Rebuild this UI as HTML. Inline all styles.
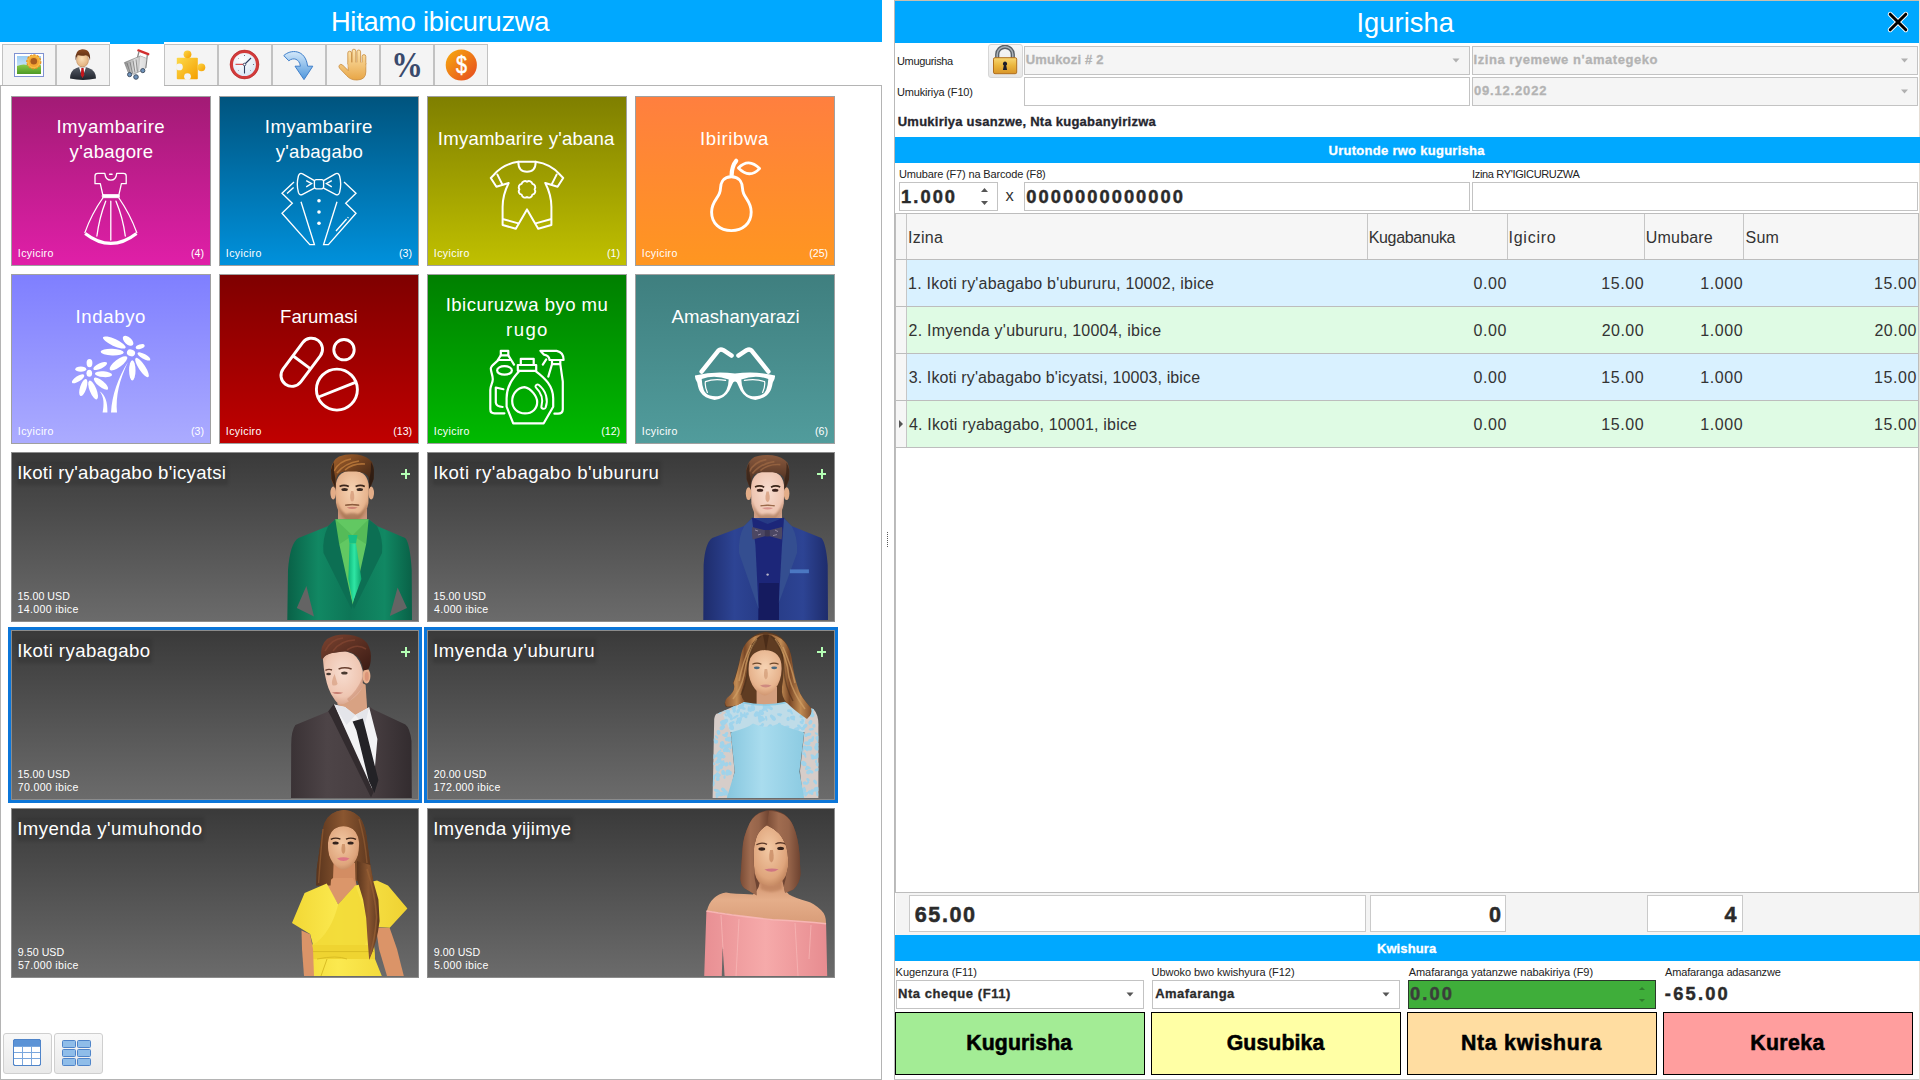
<!DOCTYPE html>
<html><head><meta charset="utf-8"><title>Igurisha</title><style>
html,body{margin:0;padding:0;background:#fff;}
body{width:1920px;height:1080px;position:relative;overflow:hidden;font-family:"Liberation Sans",sans-serif;}
div,span.t,svg{position:absolute;box-sizing:border-box;}
span.t{white-space:pre;display:block;}
</style></head><body>
<div style="left:0px;top:0px;width:882px;height:42px;background:#00a8ff;"></div>
<span class="t" style="left:330.92px;top:8px;font-size:27.3px;line-height:27.3px;color:#fff;letter-spacing:-0.279px;">Hitamo ibicuruzwa</span>
<div style="left:2px;top:44px;width:54px;height:42px;background:#f4f4f4;border:1px solid #c2c2c2;"></div>
<div style="left:56px;top:44px;width:54px;height:42px;background:#f4f4f4;border:1px solid #c2c2c2;"></div>
<div style="left:110px;top:42px;width:54px;height:44px;background:#fff;border-top:2px solid #00a8ff;"></div>
<div style="left:164px;top:44px;width:54px;height:42px;background:#f4f4f4;border:1px solid #c2c2c2;"></div>
<div style="left:218px;top:44px;width:54px;height:42px;background:#f4f4f4;border:1px solid #c2c2c2;"></div>
<div style="left:272px;top:44px;width:54px;height:42px;background:#f4f4f4;border:1px solid #c2c2c2;"></div>
<div style="left:326px;top:44px;width:54px;height:42px;background:#f4f4f4;border:1px solid #c2c2c2;"></div>
<div style="left:380px;top:44px;width:54px;height:42px;background:#f4f4f4;border:1px solid #c2c2c2;"></div>
<div style="left:434px;top:44px;width:54px;height:42px;background:#f4f4f4;border:1px solid #c2c2c2;"></div>
<svg style="left:0;top:40px" width="492" height="48" viewBox="0 40 492 48">
<defs>
<linearGradient id="tSky" x1="0" y1="0" x2="0" y2="1"><stop offset="0" stop-color="#9ccdf3"/><stop offset="1" stop-color="#e4f2fb"/></linearGradient>
<linearGradient id="tGrass" x1="0" y1="0" x2="0" y2="1"><stop offset="0" stop-color="#8ccb4a"/><stop offset="1" stop-color="#4d9a26"/></linearGradient>
<linearGradient id="tSuit" x1="0" y1="0" x2="0" y2="1"><stop offset="0" stop-color="#5a606c"/><stop offset="1" stop-color="#1f232b"/></linearGradient>
<radialGradient id="tFace" cx="0.45" cy="0.4" r="0.7"><stop offset="0" stop-color="#fbe0b8"/><stop offset="1" stop-color="#dca672"/></radialGradient>
<linearGradient id="tHair" x1="0" y1="0" x2="0" y2="1"><stop offset="0" stop-color="#8a4a22"/><stop offset="1" stop-color="#4e2610"/></linearGradient>
<linearGradient id="tCart" x1="0" y1="0" x2="1" y2="0"><stop offset="0" stop-color="#8d8d8d"/><stop offset="0.5" stop-color="#e2e2e2"/><stop offset="1" stop-color="#8a8a8a"/></linearGradient>
<linearGradient id="tPuz" x1="0" y1="0" x2="1" y2="1"><stop offset="0" stop-color="#fcd949"/><stop offset="1" stop-color="#f59f00"/></linearGradient>
<radialGradient id="tClk" cx="0.4" cy="0.35" r="0.8"><stop offset="0" stop-color="#ffffff"/><stop offset="1" stop-color="#cfe0f2"/></radialGradient>
<linearGradient id="tArr" x1="0" y1="0" x2="0" y2="1"><stop offset="0" stop-color="#d3e8fa"/><stop offset="1" stop-color="#4f97dc"/></linearGradient>
<linearGradient id="tHand" gradientUnits="userSpaceOnUse" x1="0" y1="49" x2="0" y2="80"><stop offset="0" stop-color="#fde6b2"/><stop offset="1" stop-color="#e8a646"/></linearGradient>
<linearGradient id="tCoin" x1="0" y1="0" x2="1" y2="1"><stop offset="0" stop-color="#f7ad10"/><stop offset="1" stop-color="#e6481f"/></linearGradient>
</defs>
<!-- 1 picture -->
<rect x="14.5" y="53.5" width="29" height="23" fill="#fff" stroke="#7f92d2"/>
<rect x="17" y="56" width="24" height="18" fill="url(#tSky)"/>
<path d="M17 66 Q24 63 30 66 T41 65 V74 H17Z" fill="url(#tGrass)"/>
<circle cx="33.8" cy="61.8" r="7" fill="#f7bd45" stroke="#e58e22" stroke-width="1.2" stroke-dasharray="2.2 1.4"/>
<circle cx="33.8" cy="61.8" r="5.2" fill="#f4a733"/>
<circle cx="33.8" cy="61.3" r="3.3" fill="#a95c1e"/>
<!-- 2 user -->
<path d="M70 78.6 Q70 70.5 76.5 68 L82.5 66 L88.5 68 Q96 70.5 96 78.6 Q83 81.2 70 78.6Z" fill="url(#tSuit)"/>
<path d="M79 67.2 L86 67.2 L82.5 77.5Z" fill="#fff"/>
<path d="M81.4 68 H83.6 L84.3 75 L82.5 78 L80.7 75Z" fill="#c3161c"/>
<ellipse cx="82.5" cy="60" rx="6" ry="7" fill="url(#tFace)" stroke="#b98252" stroke-width="0.5"/>
<path d="M75.6 60.5 Q74.5 50 82 49.3 Q91 48.8 90 60.5 Q89 55.5 86 55.2 Q81 56.5 78 55 Q76.3 56.5 75.6 60.5Z" fill="url(#tHair)"/>
<!-- 3 cart -->
<path d="M138.4 50.4 L148.2 54.2" stroke="#d22f2f" stroke-width="2.4" stroke-linecap="round"/>
<path d="M139 51.5 L137.4 58 M147.3 55 L145.8 68" stroke="#8a8a8a" stroke-width="1.3"/>
<path d="M124.4 62.6 L140.3 56 L146.6 58.6 L145 69 L133.6 74.2 L128.2 72.3Z" fill="url(#tCart)" stroke="#777" stroke-width="0.6"/>
<path d="M140.3 56 L146.6 58.6 L145 69 L139 71.5Z" fill="#f4f4f4" opacity="0.75"/>
<path d="M127 63 L130 72.5 M130 62 L132.4 73 M133 60.6 L135 72.6 M136 59.4 L137.4 71.6" stroke="#6f6f6f" stroke-width="0.7"/>
<circle cx="129.6" cy="74.6" r="2.1" fill="#6f93bb" stroke="#39475a" stroke-width="0.9"/>
<circle cx="136" cy="77" r="2.3" fill="#6f93bb" stroke="#39475a" stroke-width="0.9"/>
<circle cx="142.8" cy="70.6" r="2.1" fill="#6f93bb" stroke="#39475a" stroke-width="0.9"/>
<!-- 4 puzzle -->
<g fill="url(#tPuz)"><rect x="176.8" y="57.8" width="21" height="21.4" rx="0.8"/><circle cx="187.5" cy="54.3" r="3.9"/><circle cx="201.4" cy="67.3" r="3.9"/></g>
<circle cx="179.4" cy="66.9" r="3.4" fill="#f4f4f4"/><circle cx="187.5" cy="76.6" r="3.4" fill="#f4f4f4"/>
<!-- 5 clock -->
<circle cx="244.5" cy="64.5" r="13" fill="url(#tClk)" stroke="#d23b3b" stroke-width="3"/>
<circle cx="244.5" cy="64.5" r="14.4" fill="none" stroke="#b52a2a" stroke-width="0.6"/>
<path d="M244.5 64.5 L251 58" stroke="#2d3d5e" stroke-width="1.1"/><path d="M244.5 64.5 V73.5" stroke="#2d3d5e" stroke-width="1.1"/>
<path d="M235.5 64.3 H244.5" stroke="#d22c2c" stroke-width="1"/><circle cx="244.5" cy="64.5" r="1.3" fill="#fff" stroke="#2d3d5e" stroke-width="0.8"/>
<g fill="#445"><circle cx="244.5" cy="55.4" r="0.5"/><circle cx="253.6" cy="64.5" r="0.5"/><circle cx="238.6" cy="58.4" r="0.4"/><circle cx="250.4" cy="70.4" r="0.4"/><circle cx="238.6" cy="70.4" r="0.4"/></g>
<!-- 6 arrow -->
<path d="M283.8 55.6 C290 49.4 305.5 48.5 307.6 66.2 L312.8 66.2 L304 79.6 L295 66.2 L300.4 66.2 C299.4 58.8 293.4 57 288.8 60.8Z" fill="url(#tArr)" stroke="#3f7fca" stroke-width="1"/>
<!-- 7 hand -->
<g fill="url(#tHand)" stroke="#c98c3c" stroke-width="0.8">
<path d="M339.2 65.4 Q340.6 63.4 342.6 65 L348.2 70.6 V63 H365.8 V72 Q365.8 79.8 357 80 Q350.5 80.2 346.6 75.6 L339.6 68.2 Q338.4 66.8 339.2 65.4Z"/>
<rect x="347.8" y="51.2" width="3.7" height="14" rx="1.85"/><rect x="352.1" y="49.2" width="3.7" height="16" rx="1.85"/><rect x="356.9" y="50" width="3.7" height="15.2" rx="1.85"/><rect x="362.1" y="54.6" width="3.7" height="11" rx="1.85"/>
</g>
<rect x="348.3" y="62.4" width="17.1" height="5" fill="url(#tHand)"/>
<!-- 9 coin -->
<circle cx="461.3" cy="65" r="15.6" fill="url(#tCoin)"/>
<text transform="translate(461.4 73) scale(0.84 1)" x="0" y="0" text-anchor="middle" font-family="Liberation Sans, sans-serif" font-size="23.5" fill="#fff" stroke="#fff" stroke-width="0.5">$</text>
<!-- 8 percent -->
<text transform="translate(407 76.8) scale(0.88 1)" x="0" y="0" text-anchor="middle" font-family="Liberation Serif, serif" font-weight="bold" font-size="36" fill="#3a4a6c">%</text>
</svg>
<div style="left:0px;top:85px;width:1px;height:995px;background:#b4b4b4;"></div>
<div style="left:0px;top:85px;width:110px;height:1px;background:#b4b4b4;"></div>
<div style="left:164px;top:85px;width:718px;height:1px;background:#b4b4b4;"></div>
<div style="left:881px;top:85px;width:1px;height:995px;background:#b4b4b4;"></div>
<div style="left:0px;top:1079px;width:882px;height:1px;background:#b4b4b4;"></div>
<div style="left:11px;top:96px;width:200px;height:170px;background:linear-gradient(180deg,#a21b75,#e01fa8);border:1px solid #a0a0a0;"></div>
<span class="t" style="left:56.48px;top:118px;font-size:18.6px;line-height:18.6px;color:#fff;letter-spacing:0.489px;">Imyambarire</span>
<span class="t" style="left:69.56px;top:143px;font-size:18.6px;line-height:18.6px;color:#fff;letter-spacing:0.317px;">y'abagore</span>
<span class="t" style="left:17.85px;top:248px;font-size:10.6px;line-height:10.6px;color:#fff;letter-spacing:0.373px;">Icyiciro</span>
<span class="t" style="left:191.10px;top:248px;font-size:10.6px;line-height:10.6px;color:#fff;">(4)</span>
<div style="left:219px;top:96px;width:200px;height:170px;background:linear-gradient(180deg,#00547e,#0091dc);border:1px solid #a0a0a0;"></div>
<span class="t" style="left:264.83px;top:118px;font-size:18.6px;line-height:18.6px;color:#fff;letter-spacing:0.419px;">Imyambarire</span>
<span class="t" style="left:275.71px;top:143px;font-size:18.6px;line-height:18.6px;color:#fff;letter-spacing:0.245px;">y'abagabo</span>
<span class="t" style="left:225.85px;top:248px;font-size:10.6px;line-height:10.6px;color:#fff;letter-spacing:0.373px;">Icyiciro</span>
<span class="t" style="left:399.10px;top:248px;font-size:10.6px;line-height:10.6px;color:#fff;">(3)</span>
<div style="left:427px;top:96px;width:200px;height:170px;background:linear-gradient(180deg,#7f7f00,#c0c000);border:1px solid #a0a0a0;"></div>
<span class="t" style="left:437.83px;top:130px;font-size:18.6px;line-height:18.6px;color:#fff;letter-spacing:0.200px;">Imyambarire y'abana</span>
<span class="t" style="left:433.85px;top:248px;font-size:10.6px;line-height:10.6px;color:#fff;letter-spacing:0.373px;">Icyiciro</span>
<span class="t" style="left:607.10px;top:248px;font-size:10.6px;line-height:10.6px;color:#fff;">(1)</span>
<div style="left:635px;top:96px;width:200px;height:170px;background:linear-gradient(180deg,#ff7f3f,#ff9620);border:1px solid #a0a0a0;"></div>
<span class="t" style="left:699.93px;top:130px;font-size:18.6px;line-height:18.6px;color:#fff;letter-spacing:0.628px;">Ibiribwa</span>
<span class="t" style="left:641.85px;top:248px;font-size:10.6px;line-height:10.6px;color:#fff;letter-spacing:0.373px;">Icyiciro</span>
<span class="t" style="left:809.22px;top:248px;font-size:10.6px;line-height:10.6px;color:#fff;">(25)</span>
<div style="left:11px;top:274px;width:200px;height:170px;background:linear-gradient(180deg,#7f7fff,#ababff);border:1px solid #a0a0a0;"></div>
<span class="t" style="left:75.58px;top:308px;font-size:18.6px;line-height:18.6px;color:#fff;letter-spacing:0.617px;">Indabyo</span>
<span class="t" style="left:17.85px;top:426px;font-size:10.6px;line-height:10.6px;color:#fff;letter-spacing:0.373px;">Icyiciro</span>
<span class="t" style="left:191.10px;top:426px;font-size:10.6px;line-height:10.6px;color:#fff;">(3)</span>
<div style="left:219px;top:274px;width:200px;height:170px;background:linear-gradient(180deg,#7f0000,#c00000);border:1px solid #a0a0a0;"></div>
<span class="t" style="left:280.01px;top:308px;font-size:18.6px;line-height:18.6px;color:#fff;letter-spacing:0.033px;">Farumasi</span>
<span class="t" style="left:225.85px;top:426px;font-size:10.6px;line-height:10.6px;color:#fff;letter-spacing:0.373px;">Icyiciro</span>
<span class="t" style="left:393.22px;top:426px;font-size:10.6px;line-height:10.6px;color:#fff;">(13)</span>
<div style="left:427px;top:274px;width:200px;height:170px;background:linear-gradient(180deg,#007f00,#00ba00);border:1px solid #a0a0a0;"></div>
<span class="t" style="left:445.68px;top:296px;font-size:18.6px;line-height:18.6px;color:#fff;letter-spacing:0.447px;">Ibicuruzwa byo mu</span>
<span class="t" style="left:506.09px;top:321px;font-size:18.6px;line-height:18.6px;color:#fff;letter-spacing:1.384px;">rugo</span>
<span class="t" style="left:433.85px;top:426px;font-size:10.6px;line-height:10.6px;color:#fff;letter-spacing:0.373px;">Icyiciro</span>
<span class="t" style="left:601.22px;top:426px;font-size:10.6px;line-height:10.6px;color:#fff;">(12)</span>
<div style="left:635px;top:274px;width:200px;height:170px;background:linear-gradient(180deg,#3f7f7f,#519c9c);border:1px solid #a0a0a0;"></div>
<span class="t" style="left:671.60px;top:308px;font-size:18.6px;line-height:18.6px;color:#fff;letter-spacing:-0.012px;">Amashanyarazi</span>
<span class="t" style="left:641.85px;top:426px;font-size:10.6px;line-height:10.6px;color:#fff;letter-spacing:0.373px;">Icyiciro</span>
<span class="t" style="left:815.10px;top:426px;font-size:10.6px;line-height:10.6px;color:#fff;">(6)</span>
<svg style="left:0;top:90px" width="882" height="360" viewBox="0 90 882 360">
<g fill="none" stroke="#fff" stroke-width="1.3" stroke-linejoin="round" stroke-linecap="round">
<!-- dress -->
<path d="M102.7 194.4 L100.3 183.7 L95 183.7 L95 176 Q95 173.4 97.8 173.4 L104.8 173.4 Q105.6 180.2 110.8 180.2 Q116 180.2 116.7 173.4 L123.4 173.4 Q126.2 173.4 126.2 176 L126.2 183.7 L121.4 183.7 L119 194.4"/>
<path d="M102.8 198 Q91.5 214 84.9 232.6 M118.9 198 Q130 214 136.8 232.6"/>
<path d="M105.7 201.2 Q99.2 218 96.9 236 M110.8 201.2 V240 M116 201.2 Q123 218 125.3 236"/>
<path d="M85.2 233.4 Q110.8 253.4 136.5 233.4" stroke-width="3.2" stroke-linecap="butt"/>
<rect x="102.3" y="194.6" width="17.1" height="3.1" rx="0.8" fill="#fff" stroke-width="0.8"/>
<path d="M109.6 174.2 h2.4" stroke-width="1.6"/>
</g>
<g fill="none" stroke="#fff" stroke-width="1.35" stroke-linejoin="miter" stroke-linecap="butt">
<!-- tuxedo -->
<path d="M314.4 180.6 L302.6 173.8 Q299.6 172.4 298.4 176 Q296.2 184.2 298.4 192.4 Q299.6 196 302.6 194.4 L314.4 188.2 M323.6 180.6 L335.4 173.8 Q338.4 172.4 339.6 176 Q341.8 184.2 339.6 192.4 Q338.4 196 335.4 194.4 L323.6 188.2" stroke-linejoin="round"/>
<rect x="314.4" y="179.6" width="9.2" height="9.2" rx="2"/>
<path d="M306.2 180.6 L311.6 183.6 L306.2 186.8 M331.8 180.6 L326.4 183.6 L331.8 186.8"/>
<path d="M294 182 L282 193.3 L292.3 203.3 L282 213.3 L309.8 244.6 L314.4 244.6 L301 201.7"/>
<path d="M344 182 L356 193.3 L345.7 203.3 L356 213.3 L328.4 244.6 L323.6 244.6 L337 201.7"/>
<path d="M293.6 187.5 L287 193.6 M346.6 219 L336 231 M348.4 217.2 L347.6 218"/>
</g>
<g fill="#fff"><circle cx="319" cy="200.8" r="1.8"/><circle cx="319" cy="212" r="1.8"/><circle cx="319" cy="223.3" r="1.8"/></g>
<g fill="none" stroke="#fff" stroke-width="2" stroke-linejoin="round" stroke-linecap="round">
<!-- romper -->
<path d="M518.3 161.8 Q503 164 493.7 175 L490.8 178 L496.4 186.7 L508.7 183 Q502.6 195 502.6 207 L502.6 225 L515.8 228.8 L527 209.4 L538.2 228.8 L551.4 225 L551.4 207 Q551.4 195 545.3 183 L557.6 186.7 L563.2 178 L560.3 175 Q551 164 535.7 161.8 Z"/>
<path d="M518.3 161.8 Q518.3 171.8 527 171.8 Q535.7 171.8 535.7 161.8"/>
<path d="M497.4 174.6 L502.4 184.6 M556.6 174.6 L551.6 184.6 M503.4 219.2 L518.3 223.4 M550.6 219.2 L535.7 223.4"/>
<path d="M527.00 181.70 A3.4 3.4 0 0 1 532.37 183.93 A3.4 3.4 0 0 1 534.60 189.30 A3.4 3.4 0 0 1 532.37 194.67 A3.4 3.4 0 0 1 527.00 196.90 A3.4 3.4 0 0 1 521.63 194.67 A3.4 3.4 0 0 1 519.40 189.30 A3.4 3.4 0 0 1 521.63 183.93 A3.4 3.4 0 0 1 527.00 181.70 Z" stroke-width="1.9"/>
</g>
<g fill="none" stroke="#fff" stroke-linejoin="round" stroke-linecap="round">
<!-- pear -->
<path d="M731.3 176.8 C722.4 176.8 720.4 184 720.4 189 C720.4 197.4 711.6 200.2 711.6 212 C711.6 223.6 720 230.6 731.3 230.6 C742.6 230.6 751.2 223.6 751.2 212 C751.2 200.2 742.6 197.4 742.6 189 C742.6 184 740.4 176.8 731.3 176.8Z" stroke-width="2.9"/>
<path d="M731.6 175.4 Q731.8 166 736.2 160.8" stroke-width="4.2"/>
<path d="M738.4 168 Q748.5 157.5 759.6 168.6 Q749.5 179.2 738.4 168Z" stroke-width="2.8"/>
</g>
<g fill="#fff" stroke="none"><ellipse cx="114.3" cy="342.5" rx="12.4" ry="3.5" transform="rotate(24.7 114.3 342.5)"/><ellipse cx="112.2" cy="352.1" rx="11.6" ry="3.3" transform="rotate(2 112.2 352.1)"/><ellipse cx="128.1" cy="340.8" rx="6.4" ry="3.5" transform="rotate(42 128.1 340.8)"/><ellipse cx="140.2" cy="346.6" rx="4.6" ry="2.3" transform="rotate(-17 140.2 346.6)"/><ellipse cx="143.9" cy="356.4" rx="7.2" ry="2.5" transform="rotate(29 143.9 356.4)"/><ellipse cx="142" cy="367.5" rx="11.4" ry="3.3" transform="rotate(56.6 142 367.5)"/><ellipse cx="132.3" cy="370.4" rx="10.2" ry="3.2" transform="rotate(90 132.3 370.4)"/><ellipse cx="118.5" cy="363.3" rx="10.8" ry="3.7" transform="rotate(143 118.5 363.3)"/><ellipse cx="131" cy="352.9" rx="4.2" ry="3.3" transform="rotate(20 131 352.9)"/><ellipse cx="89.5" cy="363.1" rx="4.2" ry="2.9" transform="rotate(90 89.5 363.1)"/><ellipse cx="100.2" cy="366" rx="7.5" ry="2.7" transform="rotate(-25 100.2 366)"/><ellipse cx="103.5" cy="374.2" rx="8.6" ry="2.9" transform="rotate(5 103.5 374.2)"/><ellipse cx="101" cy="383.7" rx="8.9" ry="3.1" transform="rotate(39 101 383.7)"/><ellipse cx="93.1" cy="390" rx="10.1" ry="3.4" transform="rotate(68 93.1 390)"/><ellipse cx="83.3" cy="387.5" rx="9" ry="3.2" transform="rotate(108 83.3 387.5)"/><ellipse cx="78.1" cy="378.8" rx="7.2" ry="2.7" transform="rotate(147 78.1 378.8)"/><ellipse cx="80.8" cy="369.2" rx="5.5" ry="2.6" transform="rotate(0 80.8 369.2)"/><ellipse cx="89.3" cy="373.3" rx="2.8" ry="3.5" transform="rotate(0 89.3 373.3)"/><path d="M127.9 362 C118 378 112 395 111 412.6 L117 412.6 C115.5 396 119.5 380 127.9 362Z"/><path d="M99.6 391.2 C104.4 397 104 405 102.6 412.6 L107.4 412.6 C107.6 402 105.5 395 99.6 391.2Z"/></g>
<g fill="none" stroke="#fff" stroke-width="2.9">
<!-- pills -->
<g transform="rotate(-53.3 301.75 362.3)"><rect x="274.4" y="351.3" width="54.7" height="22" rx="11"/><path d="M301.75 351.3 V373.3"/></g>
<circle cx="344" cy="349.7" r="10.2"/>
<circle cx="336.9" cy="389.6" r="20.5"/><path d="M318.6 397 L355.4 382.4"/>
</g>
<g fill="none" stroke="#fff" stroke-width="2.2" stroke-linejoin="round" stroke-linecap="round">
<!-- cleaning -->
<rect x="520.8" y="358.8" width="12.9" height="6.2"/><rect x="517.8" y="365" width="18.4" height="5.8"/>
<path d="M519.5 370.8 C513 378 506.6 386 506.6 398.3 L506.6 406.7 L513.2 423.3 L543.7 423.3 L553.2 406.7 L553.2 398.3 C553.2 386 545 378 535.3 370.8"/>
<path d="M524.5 387.2 C517 388 512.2 394 512.2 401 C512.2 408.4 517.6 413.4 525 413.4 C532.4 413.4 537.2 408.6 537.2 402 C537.2 397 531.5 388.4 524.5 387.2Z"/>
<path d="M538.6 384.8 C546.4 391 548.4 400 545.6 407.6 C544.6 409.6 541 408.8 541.4 406.6 C543.4 400 541.6 393 535.8 387.4 C534.6 385.6 537.2 383.8 538.6 384.8Z" stroke-width="2"/>
<rect x="500.8" y="350.8" width="7.5" height="4.6"/>
<path d="M500.8 355.4 L497.8 360 L511.2 360 L508.3 355.4 M511.2 360 L514 364.6 M497.8 360.6 C494 364 490.8 366 490.8 368.6 C490.8 372 492.8 375 492.8 379.2 C492.8 383 490.3 386 490.3 390 L490.3 409.2 Q490.3 413.3 494.4 413.3 L504.4 413.3"/>
<ellipse cx="504.5" cy="370.4" rx="7.4" ry="4.3"/>
<path d="M503.4 389.2 L495.8 387.5 L495.8 402.6 Q496.4 406.6 502.6 407"/>
<path d="M540.4 350.8 L556.6 350.8 Q563.6 352 563.6 360 L549.6 360 Q549 355.2 543.8 354.6 Z"/>
<path d="M546.2 359.4 L542.8 364.6"/>
<path d="M552 360.6 L552 364.2 L548.3 376.6 M560.3 360.6 L560.3 364.2 L562.8 381.7 L562.8 409.4 Q562.6 413.7 558 413.7 L554.4 413.7 M552 364.2 L560.3 364.2"/>
</g>
<!-- glasses -->
<path fill="#fff" fill-rule="evenodd" d="M695 375.4 Q715 370.8 735 373.6 Q755 370.8 775 375.4 Q775.4 379 772.8 382.4 Q771.5 390 769.1 392.8 Q766 398 755.4 399.9 Q746 399.6 740.6 390.6 L736.9 382.4 Q735 380.4 733.1 382.4 L729.4 390.6 Q724 399.6 714.6 399.9 Q704 398 700.9 392.8 Q698.5 390 697.2 382.4 Q694.6 379 695 375.4Z
M701.7 378.9 Q714.6 374.6 728.7 379.4 Q728.6 385 726.5 389.8 Q724 394.6 719.8 395.8 Q715 397 710 395.6 Q705.6 394.4 703.8 390 Q702 385.4 701.7 378.9Z
M768.3 378.9 Q755.4 374.6 741.3 379.4 Q741.4 385 743.5 389.8 Q746 394.6 750.2 395.8 Q755 397 760 395.6 Q764.4 394.4 766.2 390 Q768 385.4 768.3 378.9Z"/>
<g fill="none" stroke="#fff" stroke-linecap="round" stroke-linejoin="round">
<path d="M701.6 371.6 L718.4 350.6 Q720.4 348.6 723.4 350.2 L731.6 355.6 M768.4 371.6 L751.6 350.6 Q749.6 348.6 746.6 350.2 L738.4 355.6" stroke-width="4.4"/>
<path d="M707.4 392.4 Q704.6 386 705.4 381.6 Q714 378.4 725.6 380.4 M762.6 392.4 Q765.4 386 764.6 381.6 Q756 378.4 744.4 380.4" stroke-width="1.2"/>
</g>
</svg>
<svg style="left:0;top:0" width="0" height="0"><defs>
<filter id="bl05" x="-20%" y="-20%" width="140%" height="140%"><feGaussianBlur stdDeviation="0.5"/></filter>
<filter id="bl1" x="-20%" y="-20%" width="140%" height="140%"><feGaussianBlur stdDeviation="1"/></filter>
<filter id="bl2" x="-30%" y="-30%" width="160%" height="160%"><feGaussianBlur stdDeviation="2"/></filter>
<radialGradient id="skA" cx="0.5" cy="0.4" r="0.65"><stop offset="0" stop-color="#f6d3b3"/><stop offset="0.7" stop-color="#e7b48e"/><stop offset="1" stop-color="#c98d68"/></radialGradient>
<radialGradient id="skC" cx="0.5" cy="0.4" r="0.65"><stop offset="0" stop-color="#f7ddd0"/><stop offset="0.7" stop-color="#efc6b2"/><stop offset="1" stop-color="#d59f86"/></radialGradient>
<radialGradient id="skB" cx="0.45" cy="0.4" r="0.7"><stop offset="0" stop-color="#f3c9a4"/><stop offset="0.7" stop-color="#dfa57c"/><stop offset="1" stop-color="#b87b55"/></radialGradient>
<linearGradient id="gS1" x1="0" y1="0" x2="1" y2="0"><stop offset="0" stop-color="#096147"/><stop offset="0.25" stop-color="#118863"/><stop offset="0.5" stop-color="#0d7657"/><stop offset="0.78" stop-color="#118863"/><stop offset="1" stop-color="#096147"/></linearGradient>
<linearGradient id="gT1" x1="0" y1="0" x2="1" y2="0"><stop offset="0" stop-color="#0fb87a"/><stop offset="0.45" stop-color="#2fe6a4"/><stop offset="1" stop-color="#0ea86e"/></linearGradient>
<linearGradient id="gH1" x1="0" y1="0" x2="1" y2="1"><stop offset="0" stop-color="#a8642c"/><stop offset="0.5" stop-color="#6a3d1e"/><stop offset="1" stop-color="#2e1b12"/></linearGradient>
<linearGradient id="gS2" x1="0" y1="0" x2="1" y2="0"><stop offset="0" stop-color="#1e2c6c"/><stop offset="0.25" stop-color="#2d4494"/><stop offset="0.5" stop-color="#263a84"/><stop offset="0.8" stop-color="#2d4494"/><stop offset="1" stop-color="#1e2c6c"/></linearGradient>
<linearGradient id="gH2" x1="0" y1="0" x2="0" y2="1"><stop offset="0" stop-color="#8a5a3e"/><stop offset="1" stop-color="#3f261a"/></linearGradient>
<linearGradient id="gS3" x1="0" y1="0" x2="1" y2="0"><stop offset="0" stop-color="#3a3235"/><stop offset="0.3" stop-color="#4d4447"/><stop offset="0.7" stop-color="#453c3f"/><stop offset="1" stop-color="#332c2f"/></linearGradient>
<linearGradient id="gH3" x1="0" y1="0" x2="1" y2="1"><stop offset="0" stop-color="#7b4330"/><stop offset="1" stop-color="#3a1b14"/></linearGradient>
<linearGradient id="gH4" x1="0" y1="0" x2="1" y2="0"><stop offset="0" stop-color="#8a5530"/><stop offset="0.3" stop-color="#c28c54"/><stop offset="0.5" stop-color="#7a4827"/><stop offset="0.75" stop-color="#c08a52"/><stop offset="1" stop-color="#85522f"/></linearGradient>
<linearGradient id="gD4" x1="0" y1="0" x2="1" y2="0"><stop offset="0" stop-color="#86c6de"/><stop offset="0.45" stop-color="#a9dcee"/><stop offset="1" stop-color="#8ccbe2"/></linearGradient>
<linearGradient id="gH5" x1="0" y1="0" x2="1" y2="0"><stop offset="0" stop-color="#5a351d"/><stop offset="0.5" stop-color="#8a5630"/><stop offset="1" stop-color="#5e381f"/></linearGradient>
<linearGradient id="gD5" x1="0" y1="0" x2="1" y2="0"><stop offset="0" stop-color="#f2d835"/><stop offset="0.4" stop-color="#fbe94f"/><stop offset="1" stop-color="#efd232"/></linearGradient>
<linearGradient id="gH6" x1="0" y1="0" x2="1" y2="0"><stop offset="0" stop-color="#7a4c36"/><stop offset="0.35" stop-color="#a06c50"/><stop offset="0.65" stop-color="#96644a"/><stop offset="1" stop-color="#6e4330"/></linearGradient>
<linearGradient id="gD6" x1="0" y1="0" x2="1" y2="0"><stop offset="0" stop-color="#e88f93"/><stop offset="0.5" stop-color="#f6aaaa"/><stop offset="1" stop-color="#e78c90"/></linearGradient>
<linearGradient id="gSk6" x1="0" y1="0" x2="0" y2="1"><stop offset="0" stop-color="#c98b66"/><stop offset="0.5" stop-color="#e5ae8a"/><stop offset="1" stop-color="#d89c78"/></linearGradient>
</defs></svg>
<div style="left:11px;top:452px;width:408px;height:170px;background:linear-gradient(180deg,#3a3a3a,#6b6b6b);border:1px solid #8c8c8c;"></div>
<svg style="left:287px;top:453px" width="126" height="168" viewBox="0 0 126 168">
<rect x="51" y="56" width="29" height="18" fill="#c9957a"/>
<ellipse cx="46.2" cy="40" rx="2.8" ry="6.4" fill="#e3ad88"/><ellipse cx="84.2" cy="40" rx="2.8" ry="6.4" fill="#e3ad88"/><path d="M48.6 35 Q48.6 17.8 65.2 17.8 Q81.80000000000001 17.8 81.80000000000001 35 L81.4 50 Q79.30000000000001 61.2 71.7 67.0 Q65.2 69.60000000000001 58.7 67.0 Q51.1 61.2 49.0 50Z" fill="url(#skA)"/><path d="M49.0 47 Q51.1 61.2 58.7 67.0 Q65.2 69.60000000000001 71.7 67.0 Q79.30000000000001 61.2 81.4 47 Q76.80000000000001 59.2 71.2 61.2 Q65.2 58.7 59.2 61.2 Q53.6 59.2 49.0 47Z" fill="#8a5a3c" opacity="0.55" filter="url(#bl1)"/><g filter="url(#bl05)"><path d="M58.2 52.2 Q65.2 50.4 72.2 52.2 Q65.2 51.6 58.2 52.2Z" fill="#8a5a3c" stroke="#8a5a3c" stroke-width="1"/><ellipse cx="57.6" cy="36.6" rx="3.2" ry="1.5" fill="#3a2a22"/><ellipse cx="72.8" cy="36.6" rx="3.2" ry="1.5" fill="#3a2a22"/><path d="M52.6 33.4 Q57.2 31.2 61.800000000000004 33.6 M77.8 33.4 Q73.2 31.2 68.60000000000001 33.6" stroke="#3b261a" stroke-width="1.7" fill="none"/><path d="M64.0 38 Q61.6 47.5 65.2 48.6 Q68.8 47.5 66.4 38" fill="#d49a78" opacity="0.75"/><path d="M59.6 54.4 Q65.2 53 70.8 54.4 Q65.2 57.4 59.6 54.4Z" fill="#cf8474"/></g><path d="M48.6 36 Q46 32 44.2 26 L43.9 16 Q45.5 7 52 3.4 Q60 0.6 70 1.6 Q80 3 85 9 Q87.4 14 86.9 20 L86.4 27 Q85 32 82 36 Q82.4 28 81.4 24 Q79 19.6 70 18.6 L58 18.6 Q51.6 19.4 49.8 24 Q48.4 28 48.6 36Z" fill="url(#gH1)"/><path d="M47 18 Q52 8 64 6 M50 20 Q58 10 72 8 M58 17 Q66 10 78 11" stroke="#c98440" stroke-width="1.6" fill="none" opacity="0.7" filter="url(#bl05)"/><path d="M44.4 26 L44 17 Q45 12 47 9 Q46.4 18 48.4 26 L48.6 35Z M86.6 26 L86.9 17 Q86 12 84 9 Q84.6 18 82.4 26 L82 35Z" fill="#2a1a12" opacity="0.8"/>
<path d="M41.2 73 L11.5 85 Q3 90 1 117 L0.3 167 L125 167 L124.7 117 Q123 90 118.2 85 L90 73 L82 66.5 L48 66.5Z" fill="url(#gS1)"/>
<path d="M19.4 133 L9.8 155 L27 163.4Z M110.6 134.4 L120 155 L102.8 163Z" fill="#646464"/>
<path d="M48.3 66.3 L81.6 66.3 L84.5 82 L65.7 152 L47 82Z" fill="#62c862"/>
<path d="M48.3 66.3 L65.5 82.5 L81.6 66.3 L86 86 L79.6 91.5 L65.7 82.5 L52 91.5 L45.5 86Z" fill="#55bb58"/>
<path d="M41.2 73 L48.3 66.6 L52 90 L65.7 152 L64.5 156 L36.5 100 Q35 86 41.2 73Z" fill="#0c6f53"/>
<path d="M90 73 L81.6 66.6 L79.4 90 L65.7 152 L67 156 L95 100 Q96.4 86 90 73Z" fill="#0c6f53"/>
<path d="M61.2 82 L70.4 82 L69 90.4 L62.5 90.4Z" fill="#17c083"/>
<path d="M62.5 90.4 L69 90.4 L74.4 126 L65.8 149.4 L61.4 126Z" fill="url(#gT1)"/>
</svg>
<div style="left:18px;top:461.5px;width:207.5px;height:21.5px;background:rgba(44,44,44,0.30);box-shadow:0 0 2.5px 1.5px rgba(44,44,44,0.30);"></div>
<span class="t" style="left:17.13px;top:464px;font-size:18.6px;line-height:18.6px;color:#fff;letter-spacing:0.298px;">Ikoti ry'abagabo b'icyatsi</span>
<span class="t" style="left:17.51px;top:591px;font-size:10.6px;line-height:10.6px;color:#fff;letter-spacing:0.067px;">15.00 USD</span>
<span class="t" style="left:17.51px;top:604px;font-size:10.6px;line-height:10.6px;color:#fff;letter-spacing:0.340px;">14.000 ibice</span>
<div style="left:401px;top:473px;width:9px;height:2px;background:#b4ffb4;"></div>
<div style="left:405px;top:469px;width:2px;height:10px;background:#b4ffb4;"></div>
<div style="left:427px;top:452px;width:408px;height:170px;background:linear-gradient(180deg,#3a3a3a,#6b6b6b);border:1px solid #8c8c8c;"></div>
<svg style="left:703px;top:453px" width="126" height="168" viewBox="0 0 126 168">
<rect x="51" y="56" width="28" height="18" fill="#cfa08a"/>
<g transform="translate(-0.6 0.6)"><ellipse cx="46.2" cy="40" rx="2.8" ry="6.4" fill="#e3ad88"/><ellipse cx="84.2" cy="40" rx="2.8" ry="6.4" fill="#e3ad88"/><path d="M48.6 35 Q48.6 17.6 65.2 17.6 Q81.80000000000001 17.6 81.80000000000001 35 L81.4 50 Q79.30000000000001 61.400000000000006 71.7 67.2 Q65.2 69.80000000000001 58.7 67.2 Q51.1 61.400000000000006 49.0 50Z" fill="url(#skC)"/><path d="M49.0 47 Q51.1 61.400000000000006 58.7 67.2 Q65.2 69.80000000000001 71.7 67.2 Q79.30000000000001 61.400000000000006 81.4 47 Q76.80000000000001 59.400000000000006 71.2 61.400000000000006 Q65.2 58.900000000000006 59.2 61.400000000000006 Q53.6 59.400000000000006 49.0 47Z" fill="#9a6a4a" opacity="0.55" filter="url(#bl1)"/><g filter="url(#bl05)"><path d="M58.2 52.2 Q65.2 50.4 72.2 52.2 Q65.2 51.6 58.2 52.2Z" fill="#9a6a4a" stroke="#9a6a4a" stroke-width="1"/><ellipse cx="57.6" cy="36.6" rx="3.2" ry="1.5" fill="#3a241c"/><ellipse cx="72.8" cy="36.6" rx="3.2" ry="1.5" fill="#3a241c"/><path d="M52.6 33.4 Q57.2 31.2 61.800000000000004 33.6 M77.8 33.4 Q73.2 31.2 68.60000000000001 33.6" stroke="#3b261a" stroke-width="1.7" fill="none"/><path d="M64.0 38 Q61.6 47.5 65.2 48.6 Q68.8 47.5 66.4 38" fill="#d49a78" opacity="0.75"/><path d="M59.6 54.4 Q65.2 53 70.8 54.4 Q65.2 57.4 59.6 54.4Z" fill="#d9948c"/></g><path d="M48.6 36 Q46 32 44.2 26 L43.9 16 Q45.5 7 52 3.4 Q60 0.6 70 1.6 Q80 3 85 9 Q87.4 14 86.9 20 L86.4 27 Q85 32 82 36 Q82.4 28 81.4 24 Q79 19.6 70 18.6 L58 18.6 Q51.6 19.4 49.8 24 Q48.4 28 48.6 36Z" fill="url(#gH2)"/><path d="M47 18 Q52 8 64 6 M50 20 Q58 10 72 8 M58 17 Q66 10 78 11" stroke="#a06a44" stroke-width="1.6" fill="none" opacity="0.7" filter="url(#bl05)"/><path d="M44.4 26 L44 17 Q45 12 47 9 Q46.4 18 48.4 26 L48.6 35Z M86.6 26 L86.9 17 Q86 12 84 9 Q84.6 18 82.4 26 L82 35Z" fill="#3a2418" opacity="0.8"/></g>
<path d="M41.2 73 L9.2 85 Q2 90 0.6 112 L0.3 167 L125 167 L124.7 112 Q123 90 118.4 85 L88.6 73 L81 65 L49 65Z" fill="url(#gS2)"/>
<path d="M49 64.6 L64.6 71 L81 64.6 L85 84 L76 150 L76 167 L55.4 167 L55.4 155 L45 84Z" fill="#1c2679"/>
<path d="M56 130 H76 V167 H55.4Z" fill="#151b5f"/>
<path d="M41.2 73 L49 65.4 L52.4 92 L55.6 156 L36 100 Q35 84 41.2 73Z" fill="#344e90"/>
<path d="M88.6 73 L81 65.4 L79 92 L75.8 150 L94 100 Q95 84 88.6 73Z" fill="#344e90"/>
<path d="M64.2 77.8 L49.2 74 Q48.4 80 49.6 86.4 L64.2 82.6 L78.6 86.4 Q79.8 80 79 74Z" fill="#4c4763"/>
<path d="M52 77 l3 1 M55 82 l3 -1 M72 77 l3 1.6 M70 82.6 l4 -1" stroke="#9a8fa6" stroke-width="0.9"/>
<rect x="61.8" y="77" width="5" height="6.4" rx="1" fill="#3c3752"/>
<rect x="86.9" y="116.4" width="19" height="3.8" fill="#4b77c2"/>
<circle cx="64.6" cy="121.6" r="1.2" fill="#b9b6c8"/>
</svg>
<div style="left:434px;top:461.5px;width:224.5px;height:21.5px;background:rgba(44,44,44,0.30);box-shadow:0 0 2.5px 1.5px rgba(44,44,44,0.30);"></div>
<span class="t" style="left:433.13px;top:464px;font-size:18.6px;line-height:18.6px;color:#fff;letter-spacing:0.479px;">Ikoti ry'abagabo b'ubururu</span>
<span class="t" style="left:433.50px;top:591px;font-size:10.6px;line-height:10.6px;color:#fff;letter-spacing:0.067px;">15.00 USD</span>
<span class="t" style="left:434.09px;top:604px;font-size:10.6px;line-height:10.6px;color:#fff;letter-spacing:0.294px;">4.000 ibice</span>
<div style="left:817px;top:473px;width:9px;height:2px;background:#b4ffb4;"></div>
<div style="left:821px;top:469px;width:2px;height:10px;background:#b4ffb4;"></div>
<div style="left:8px;top:627px;width:414px;height:176px;background:transparent;border:3px solid #0b76d9;"></div>
<div style="left:11px;top:630px;width:408px;height:170px;background:linear-gradient(180deg,#3a3a3a,#6b6b6b);border:1px solid #8c8c8c;"></div>
<svg style="left:287px;top:631px" width="126" height="168" viewBox="0 0 126 168">
<path d="M58 62 L75.4 52 L78.6 53.8 L80.2 78 L68 85 L50 73Z" fill="#d8a283"/>
<ellipse cx="79.4" cy="45" rx="4" ry="7.4" fill="#e9b08e"/>
<ellipse cx="79.8" cy="45.4" rx="2" ry="4.6" fill="#d4846a" opacity="0.6"/>
<path d="M35.9 28 Q36.6 38 38.2 45 Q39.6 52 41.4 57 Q43.6 63 46.6 67 Q49.4 72 52.6 73.2 Q57 73.6 62 70.4 Q67.4 67 71 63 Q74.6 59 75.6 56 L75.8 40 Q73 28 66 23 L58 20 L44 22 Q37.4 24 35.9 28Z" fill="url(#skC)"/>
<g filter="url(#bl05)"><ellipse cx="41.6" cy="43" rx="2.4" ry="1.3" fill="#4a3a30"/><ellipse cx="57.4" cy="42" rx="3.2" ry="1.5" fill="#4a3a30"/>
<path d="M38.4 39.4 Q41.6 37.6 45 39 M51.6 38 Q57.6 35.4 64.6 38" stroke="#6a4030" stroke-width="1.4" fill="none"/>
<path d="M47.6 43 Q43.6 51.4 45.4 54.2 Q48.6 55.4 50.6 53" fill="#dba58a" opacity="0.8"/>
<path d="M44.8 61.4 Q49.6 60.2 56.2 61.8 Q50 64.6 44.8 61.4Z" fill="#c77c70"/>
<path d="M62 70.4 Q72 62 75.6 56 L75.8 46 Q70 60 60 68Z" fill="#c98e72" opacity="0.5"/></g>
<path d="M34.3 27.4 Q32.8 14 40 8 Q50 2.4 62 3.8 Q74 5 80 12 Q85 20 83.7 30 Q83 36 81 38.6 L76.4 39.4 Q75.2 33 73 29 Q69 22 60 20.5 Q48 21 42 23 Q37 24.6 35.6 28Z" fill="url(#gH3)"/>
<path d="M38 20 Q44 8 56 7 M46 20 Q54 9 68 9 M60 19 Q70 12 79 18" stroke="#8a4a34" stroke-width="1.6" fill="none" opacity="0.6" filter="url(#bl05)"/>
<path d="M47 73 L41.2 80.6 L8.4 94 Q4 100 4.2 115 L4 167 L124.8 167 L124.5 110 Q123 97 118.4 93.5 L86.5 78.4 L82.4 75.6 L83 80 L84 160 L60 100Z" fill="url(#gS3)"/>
<path d="M46.8 73.4 L58 76 L68 84 L82.2 76.2 L90.4 108 L87 147 L84.6 160.6Z" fill="#f3f3f5"/>
<path d="M46.8 73.4 L58 76 L68.4 84 L59.6 94Z M82.2 76.2 L68.4 84 L77.6 95Z" fill="#e4e5ea"/>
<path d="M65.6 90.4 L75.8 87.6 L78.6 98 L91.4 149 L87.4 162 L81.8 150 L69.4 99.6Z" fill="#232226"/>
<path d="M46.8 73 L41.2 80.6 L44.6 86.4 L84 166.4 L86.6 161Z" fill="#322b2e"/>
</svg>
<div style="left:18px;top:639.5px;width:132.0px;height:21.5px;background:rgba(44,44,44,0.30);box-shadow:0 0 2.5px 1.5px rgba(44,44,44,0.30);"></div>
<span class="t" style="left:17.13px;top:642px;font-size:18.6px;line-height:18.6px;color:#fff;letter-spacing:0.413px;">Ikoti ryabagabo</span>
<span class="t" style="left:17.51px;top:769px;font-size:10.6px;line-height:10.6px;color:#fff;letter-spacing:0.067px;">15.00 USD</span>
<span class="t" style="left:17.77px;top:782px;font-size:10.6px;line-height:10.6px;color:#fff;letter-spacing:0.316px;">70.000 ibice</span>
<div style="left:401px;top:651px;width:9px;height:2px;background:#b4ffb4;"></div>
<div style="left:405px;top:647px;width:2px;height:10px;background:#b4ffb4;"></div>
<div style="left:424px;top:627px;width:414px;height:176px;background:transparent;border:3px solid #0b76d9;"></div>
<div style="left:427px;top:630px;width:408px;height:170px;background:linear-gradient(180deg,#3a3a3a,#6b6b6b);border:1px solid #8c8c8c;"></div>
<svg style="left:703px;top:631px" width="126" height="168" viewBox="0 0 126 168">
<path d="M63 1 Q44 2 38 24 Q33 44 30 52 Q34 60 24 68 Q20 72 23 76 L44 74 L82 74 L104 88 Q110 84 108 77 Q98 66 96 60 Q90 46 89 30 Q86 3 63 1Z" fill="#5f3c22"/>
<rect x="53.6" y="56" width="20.4" height="19" fill="#d49f7e"/>
<path d="M45.4 38 Q45 20 62 19 Q79 20 78.6 38 Q78.4 50 72 58 Q66 64.4 62 64.4 Q58 64.4 52 58 Q45.6 50 45.4 38Z" fill="url(#skA)"/>
<g filter="url(#bl05)"><ellipse cx="53.8" cy="36.8" rx="3" ry="1.4" fill="#4b6a80"/><ellipse cx="71.2" cy="36.8" rx="3" ry="1.4" fill="#4b6a80"/>
<path d="M49.4 33.2 Q54 31 58.4 33.2 M66.6 33.2 Q71 31 75.6 33.2" stroke="#6a4428" stroke-width="1.1" fill="none"/>
<path d="M61.6 38 Q59.8 47 62.9 48.4 Q66 47 64.2 38" fill="#d39c78" opacity="0.75"/>
<path d="M57 54.6 Q62.6 52.4 68.6 54.6 Q62.6 58.6 57 54.6Z" fill="#cf8a80"/></g>
<path d="M39.6 71.6 Q63 76.4 82.4 71.6 L110.4 78 Q116 84 115.4 96 L115.4 167 L100 167 L97 140 L101.4 101 L27.6 101 L31.6 140 L26 167 L9.6 167 L11.2 88 Q12 82.4 14.6 82.4Z" fill="#d6cdc9"/>
<path d="M39.6 71.6 Q63 76.4 82.4 71.6 L103 77 L101.4 101 L27.6 101 L20 84Z" fill="#bfdce8"/>
<clipPath id="cl4"><path d="M39.6 71.6 Q63 76.4 82.4 71.6 L110.4 78 Q116 84 115.4 96 L115.4 167 L100 167 L97 140 L101.4 101 L27.6 101 L31.6 140 L26 167 L9.6 167 L11.2 88 Q12 82.4 14.6 82.4Z"/></clipPath>
<g fill="#9dd3ec" opacity="0.95" clip-path="url(#cl4)"><ellipse cx="45.7" cy="77.8" rx="2.8" ry="1.1" transform="rotate(96 45.7 77.8)"/><ellipse cx="49.8" cy="75.4" rx="2.5" ry="1.0" transform="rotate(78 49.8 75.4)"/><ellipse cx="20.8" cy="76.3" rx="2.4" ry="2.1" transform="rotate(22 20.8 76.3)"/><ellipse cx="35.9" cy="89.7" rx="3.3" ry="1.8" transform="rotate(71 35.9 89.7)"/><ellipse cx="109.7" cy="75.2" rx="3.1" ry="1.4" transform="rotate(26 109.7 75.2)"/><ellipse cx="25.5" cy="81.7" rx="3.1" ry="1.2" transform="rotate(105 25.5 81.7)"/><ellipse cx="76.6" cy="83.3" rx="2.6" ry="1.0" transform="rotate(11 76.6 83.3)"/><ellipse cx="34.2" cy="91.0" rx="2.4" ry="1.4" transform="rotate(105 34.2 91.0)"/><ellipse cx="58.4" cy="81.5" rx="3.0" ry="2.0" transform="rotate(44 58.4 81.5)"/><ellipse cx="70.3" cy="87.1" rx="3.2" ry="2.0" transform="rotate(52 70.3 87.1)"/><ellipse cx="110.1" cy="77.0" rx="2.4" ry="2.0" transform="rotate(27 110.1 77.0)"/><ellipse cx="61.9" cy="75.0" rx="2.8" ry="2.0" transform="rotate(103 61.9 75.0)"/><ellipse cx="99.8" cy="81.8" rx="2.9" ry="1.8" transform="rotate(104 99.8 81.8)"/><ellipse cx="58.7" cy="95.0" rx="3.3" ry="1.6" transform="rotate(120 58.7 95.0)"/><ellipse cx="19.9" cy="91.5" rx="2.8" ry="2.4" transform="rotate(148 19.9 91.5)"/><ellipse cx="41.9" cy="83.6" rx="2.8" ry="1.0" transform="rotate(83 41.9 83.6)"/><ellipse cx="30.5" cy="76.9" rx="1.7" ry="2.1" transform="rotate(23 30.5 76.9)"/><ellipse cx="38.3" cy="83.8" rx="3.2" ry="1.1" transform="rotate(81 38.3 83.8)"/><ellipse cx="67.8" cy="96.1" rx="3.1" ry="2.2" transform="rotate(50 67.8 96.1)"/><ellipse cx="54.7" cy="83.0" rx="3.2" ry="2.3" transform="rotate(27 54.7 83.0)"/><ellipse cx="31.3" cy="79.8" rx="2.0" ry="1.6" transform="rotate(106 31.3 79.8)"/><ellipse cx="39.7" cy="74.1" rx="2.4" ry="1.5" transform="rotate(102 39.7 74.1)"/><ellipse cx="107.4" cy="91.3" rx="2.5" ry="1.8" transform="rotate(122 107.4 91.3)"/><ellipse cx="19.3" cy="96.5" rx="3.0" ry="2.2" transform="rotate(144 19.3 96.5)"/><ellipse cx="52.5" cy="84.0" rx="1.8" ry="1.9" transform="rotate(11 52.5 84.0)"/><ellipse cx="20.6" cy="79.2" rx="1.9" ry="1.4" transform="rotate(9 20.6 79.2)"/><ellipse cx="14.0" cy="77.8" rx="1.8" ry="1.5" transform="rotate(5 14.0 77.8)"/><ellipse cx="99.7" cy="89.4" rx="1.9" ry="1.3" transform="rotate(63 99.7 89.4)"/><ellipse cx="49.7" cy="77.1" rx="3.1" ry="2.4" transform="rotate(84 49.7 77.1)"/><ellipse cx="61.4" cy="76.1" rx="1.8" ry="1.4" transform="rotate(48 61.4 76.1)"/><ellipse cx="95.2" cy="78.0" rx="1.6" ry="2.3" transform="rotate(95 95.2 78.0)"/><ellipse cx="28.4" cy="87.6" rx="1.6" ry="1.7" transform="rotate(176 28.4 87.6)"/><ellipse cx="98.6" cy="91.4" rx="2.1" ry="1.5" transform="rotate(30 98.6 91.4)"/><ellipse cx="89.6" cy="87.3" rx="3.0" ry="1.4" transform="rotate(40 89.6 87.3)"/><ellipse cx="93.5" cy="98.6" rx="3.1" ry="2.1" transform="rotate(147 93.5 98.6)"/><ellipse cx="86.5" cy="79.7" rx="2.5" ry="1.5" transform="rotate(5 86.5 79.7)"/><ellipse cx="16.7" cy="81.0" rx="2.1" ry="1.9" transform="rotate(172 16.7 81.0)"/><ellipse cx="57.8" cy="97.4" rx="3.4" ry="2.3" transform="rotate(66 57.8 97.4)"/><ellipse cx="35.6" cy="79.7" rx="2.0" ry="1.3" transform="rotate(112 35.6 79.7)"/><ellipse cx="102.2" cy="95.0" rx="2.5" ry="1.9" transform="rotate(144 102.2 95.0)"/><ellipse cx="22.3" cy="90.5" rx="3.2" ry="2.1" transform="rotate(135 22.3 90.5)"/><ellipse cx="60.8" cy="78.5" rx="3.0" ry="1.4" transform="rotate(144 60.8 78.5)"/><ellipse cx="109.2" cy="83.9" rx="2.3" ry="2.3" transform="rotate(130 109.2 83.9)"/><ellipse cx="30.7" cy="77.2" rx="1.9" ry="2.2" transform="rotate(145 30.7 77.2)"/><ellipse cx="28.3" cy="94.7" rx="3.4" ry="1.9" transform="rotate(63 28.3 94.7)"/><ellipse cx="67.8" cy="77.3" rx="1.6" ry="2.3" transform="rotate(117 67.8 77.3)"/><ellipse cx="65.6" cy="97.3" rx="2.4" ry="2.2" transform="rotate(149 65.6 97.3)"/><ellipse cx="34.7" cy="80.3" rx="2.1" ry="1.3" transform="rotate(106 34.7 80.3)"/><ellipse cx="39.4" cy="84.5" rx="1.8" ry="2.3" transform="rotate(64 39.4 84.5)"/><ellipse cx="58.9" cy="88.6" rx="3.2" ry="1.6" transform="rotate(165 58.9 88.6)"/><ellipse cx="63.2" cy="87.3" rx="2.5" ry="1.0" transform="rotate(79 63.2 87.3)"/><ellipse cx="31.9" cy="74.1" rx="3.0" ry="1.2" transform="rotate(85 31.9 74.1)"/><ellipse cx="85.1" cy="87.9" rx="2.2" ry="1.7" transform="rotate(100 85.1 87.9)"/><ellipse cx="90.9" cy="76.7" rx="2.6" ry="1.3" transform="rotate(50 90.9 76.7)"/><ellipse cx="89.7" cy="86.7" rx="2.6" ry="2.0" transform="rotate(164 89.7 86.7)"/><ellipse cx="57.4" cy="89.3" rx="2.5" ry="1.7" transform="rotate(125 57.4 89.3)"/><ellipse cx="58.3" cy="87.3" rx="2.5" ry="2.3" transform="rotate(126 58.3 87.3)"/><ellipse cx="99.9" cy="97.6" rx="2.1" ry="1.8" transform="rotate(170 99.9 97.6)"/><ellipse cx="96.3" cy="77.4" rx="1.8" ry="1.6" transform="rotate(13 96.3 77.4)"/><ellipse cx="37.6" cy="75.8" rx="2.8" ry="2.1" transform="rotate(161 37.6 75.8)"/><ellipse cx="29.1" cy="91.9" rx="2.8" ry="1.2" transform="rotate(159 29.1 91.9)"/><ellipse cx="108.8" cy="79.5" rx="3.3" ry="1.5" transform="rotate(88 108.8 79.5)"/><ellipse cx="111.0" cy="94.8" rx="1.9" ry="1.6" transform="rotate(93 111.0 94.8)"/><ellipse cx="47.2" cy="78.9" rx="2.2" ry="2.0" transform="rotate(4 47.2 78.9)"/><ellipse cx="68.3" cy="85.0" rx="1.6" ry="1.4" transform="rotate(112 68.3 85.0)"/><ellipse cx="64.2" cy="75.6" rx="3.4" ry="2.1" transform="rotate(175 64.2 75.6)"/><ellipse cx="24.3" cy="80.6" rx="1.7" ry="2.1" transform="rotate(49 24.3 80.6)"/><ellipse cx="26.7" cy="84.6" rx="3.2" ry="2.1" transform="rotate(47 26.7 84.6)"/><ellipse cx="28.6" cy="97.0" rx="2.6" ry="2.0" transform="rotate(16 28.6 97.0)"/><ellipse cx="19.6" cy="91.2" rx="2.4" ry="1.1" transform="rotate(169 19.6 91.2)"/><ellipse cx="76.2" cy="94.0" rx="1.8" ry="2.2" transform="rotate(12 76.2 94.0)"/><ellipse cx="98.6" cy="85.3" rx="2.2" ry="1.7" transform="rotate(167 98.6 85.3)"/><ellipse cx="40.3" cy="77.2" rx="2.5" ry="1.3" transform="rotate(20 40.3 77.2)"/><ellipse cx="29.8" cy="75.3" rx="2.0" ry="1.4" transform="rotate(55 29.8 75.3)"/><ellipse cx="88.4" cy="81.2" rx="2.5" ry="1.2" transform="rotate(62 88.4 81.2)"/><ellipse cx="15.8" cy="80.3" rx="1.6" ry="2.0" transform="rotate(99 15.8 80.3)"/><ellipse cx="32.6" cy="85.9" rx="3.3" ry="1.1" transform="rotate(147 32.6 85.9)"/><ellipse cx="56.4" cy="86.4" rx="3.1" ry="1.5" transform="rotate(91 56.4 86.4)"/><ellipse cx="81.4" cy="98.6" rx="2.2" ry="2.1" transform="rotate(127 81.4 98.6)"/><ellipse cx="76.3" cy="84.1" rx="2.2" ry="1.0" transform="rotate(23 76.3 84.1)"/><ellipse cx="20.9" cy="92.5" rx="2.1" ry="1.2" transform="rotate(15 20.9 92.5)"/><ellipse cx="96.4" cy="95.8" rx="2.8" ry="1.4" transform="rotate(44 96.4 95.8)"/><ellipse cx="42.7" cy="85.5" rx="1.9" ry="1.6" transform="rotate(47 42.7 85.5)"/><ellipse cx="108.3" cy="98.3" rx="2.6" ry="1.3" transform="rotate(174 108.3 98.3)"/><ellipse cx="44.3" cy="82.9" rx="1.6" ry="1.5" transform="rotate(85 44.3 82.9)"/><ellipse cx="63.3" cy="79.0" rx="2.5" ry="1.0" transform="rotate(48 63.3 79.0)"/><ellipse cx="22.8" cy="84.0" rx="1.7" ry="1.0" transform="rotate(55 22.8 84.0)"/><ellipse cx="36.8" cy="88.6" rx="2.6" ry="2.0" transform="rotate(118 36.8 88.6)"/><ellipse cx="84.2" cy="96.0" rx="2.3" ry="1.4" transform="rotate(177 84.2 96.0)"/><ellipse cx="28.6" cy="92.1" rx="2.8" ry="1.0" transform="rotate(150 28.6 92.1)"/><ellipse cx="26.1" cy="141.4" rx="2.9" ry="2.1" transform="rotate(25 26.1 141.4)"/><ellipse cx="19.4" cy="133.3" rx="3.1" ry="2.1" transform="rotate(149 19.4 133.3)"/><ellipse cx="20.5" cy="158.9" rx="2.8" ry="1.9" transform="rotate(41 20.5 158.9)"/><ellipse cx="10.6" cy="108.8" rx="2.2" ry="1.1" transform="rotate(150 10.6 108.8)"/><ellipse cx="20.1" cy="141.4" rx="2.7" ry="1.9" transform="rotate(88 20.1 141.4)"/><ellipse cx="10.1" cy="152.6" rx="2.9" ry="1.7" transform="rotate(96 10.1 152.6)"/><ellipse cx="21.9" cy="104.4" rx="2.9" ry="1.3" transform="rotate(13 21.9 104.4)"/><ellipse cx="14.8" cy="148.1" rx="2.0" ry="2.0" transform="rotate(176 14.8 148.1)"/><ellipse cx="18.9" cy="125.2" rx="2.5" ry="1.9" transform="rotate(138 18.9 125.2)"/><ellipse cx="21.1" cy="142.4" rx="1.7" ry="1.2" transform="rotate(46 21.1 142.4)"/><ellipse cx="23.4" cy="120.1" rx="2.6" ry="1.0" transform="rotate(11 23.4 120.1)"/><ellipse cx="14.8" cy="144.4" rx="2.8" ry="1.9" transform="rotate(52 14.8 144.4)"/><ellipse cx="19.3" cy="130.7" rx="2.4" ry="1.1" transform="rotate(161 19.3 130.7)"/><ellipse cx="13.6" cy="164.6" rx="3.3" ry="1.0" transform="rotate(83 13.6 164.6)"/><ellipse cx="24.8" cy="163.9" rx="2.4" ry="1.3" transform="rotate(38 24.8 163.9)"/><ellipse cx="27.0" cy="113.9" rx="2.6" ry="1.2" transform="rotate(94 27.0 113.9)"/><ellipse cx="27.1" cy="108.8" rx="3.1" ry="1.7" transform="rotate(160 27.1 108.8)"/><ellipse cx="22.7" cy="115.3" rx="3.2" ry="1.7" transform="rotate(4 22.7 115.3)"/><ellipse cx="10.1" cy="132.5" rx="2.4" ry="1.4" transform="rotate(25 10.1 132.5)"/><ellipse cx="16.2" cy="120.9" rx="3.1" ry="1.0" transform="rotate(135 16.2 120.9)"/><ellipse cx="25.1" cy="107.9" rx="3.3" ry="2.0" transform="rotate(162 25.1 107.9)"/><ellipse cx="15.2" cy="124.6" rx="2.3" ry="2.4" transform="rotate(106 15.2 124.6)"/><ellipse cx="16.5" cy="128.3" rx="2.1" ry="1.0" transform="rotate(18 16.5 128.3)"/><ellipse cx="25.0" cy="118.9" rx="3.3" ry="1.3" transform="rotate(48 25.0 118.9)"/><ellipse cx="19.2" cy="112.5" rx="2.3" ry="2.3" transform="rotate(159 19.2 112.5)"/><ellipse cx="24.6" cy="141.6" rx="3.2" ry="2.3" transform="rotate(99 24.6 141.6)"/><ellipse cx="23.0" cy="103.3" rx="2.9" ry="1.6" transform="rotate(135 23.0 103.3)"/><ellipse cx="21.6" cy="118.9" rx="1.7" ry="2.3" transform="rotate(23 21.6 118.9)"/><ellipse cx="18.5" cy="122.7" rx="2.1" ry="2.0" transform="rotate(176 18.5 122.7)"/><ellipse cx="14.7" cy="143.3" rx="2.1" ry="1.8" transform="rotate(71 14.7 143.3)"/><ellipse cx="13.0" cy="110.7" rx="2.0" ry="2.2" transform="rotate(89 13.0 110.7)"/><ellipse cx="14.0" cy="159.8" rx="3.4" ry="1.6" transform="rotate(25 14.0 159.8)"/><ellipse cx="13.5" cy="106.0" rx="2.2" ry="1.1" transform="rotate(43 13.5 106.0)"/><ellipse cx="14.7" cy="137.6" rx="3.2" ry="2.0" transform="rotate(74 14.7 137.6)"/><ellipse cx="17.4" cy="134.6" rx="2.3" ry="1.4" transform="rotate(11 17.4 134.6)"/><ellipse cx="15.0" cy="163.9" rx="1.8" ry="1.7" transform="rotate(113 15.0 163.9)"/><ellipse cx="25.5" cy="114.3" rx="2.1" ry="1.3" transform="rotate(72 25.5 114.3)"/><ellipse cx="18.0" cy="163.0" rx="3.1" ry="2.2" transform="rotate(4 18.0 163.0)"/><ellipse cx="10.6" cy="146.8" rx="3.2" ry="1.6" transform="rotate(106 10.6 146.8)"/><ellipse cx="10.0" cy="125.8" rx="3.3" ry="2.1" transform="rotate(154 10.0 125.8)"/><ellipse cx="27.5" cy="116.4" rx="1.8" ry="1.2" transform="rotate(94 27.5 116.4)"/><ellipse cx="22.3" cy="162.1" rx="2.9" ry="1.9" transform="rotate(138 22.3 162.1)"/><ellipse cx="18.2" cy="136.4" rx="1.7" ry="2.1" transform="rotate(42 18.2 136.4)"/><ellipse cx="26.6" cy="142.6" rx="2.1" ry="1.1" transform="rotate(45 26.6 142.6)"/><ellipse cx="21.5" cy="146.1" rx="1.8" ry="1.1" transform="rotate(94 21.5 146.1)"/><ellipse cx="20.5" cy="125.6" rx="2.0" ry="1.8" transform="rotate(2 20.5 125.6)"/><ellipse cx="15.4" cy="130.4" rx="3.3" ry="1.9" transform="rotate(159 15.4 130.4)"/><ellipse cx="18.6" cy="115.5" rx="2.0" ry="2.3" transform="rotate(127 18.6 115.5)"/><ellipse cx="15.5" cy="101.4" rx="2.5" ry="1.9" transform="rotate(76 15.5 101.4)"/><ellipse cx="14.6" cy="144.0" rx="3.3" ry="1.3" transform="rotate(6 14.6 144.0)"/><ellipse cx="16.1" cy="127.8" rx="2.8" ry="1.2" transform="rotate(143 16.1 127.8)"/><ellipse cx="23.3" cy="133.3" rx="2.0" ry="2.3" transform="rotate(56 23.3 133.3)"/><ellipse cx="24.8" cy="115.2" rx="2.0" ry="2.0" transform="rotate(53 24.8 115.2)"/><ellipse cx="27.1" cy="132.7" rx="1.9" ry="1.3" transform="rotate(75 27.1 132.7)"/><ellipse cx="22.0" cy="162.6" rx="1.9" ry="1.5" transform="rotate(38 22.0 162.6)"/><ellipse cx="114.6" cy="109.4" rx="1.7" ry="1.0" transform="rotate(71 114.6 109.4)"/><ellipse cx="113.4" cy="158.3" rx="2.9" ry="2.4" transform="rotate(168 113.4 158.3)"/><ellipse cx="104.3" cy="112.2" rx="3.3" ry="2.0" transform="rotate(6 104.3 112.2)"/><ellipse cx="109.6" cy="125.0" rx="2.3" ry="1.4" transform="rotate(30 109.6 125.0)"/><ellipse cx="99.0" cy="118.5" rx="2.2" ry="2.3" transform="rotate(22 99.0 118.5)"/><ellipse cx="114.4" cy="113.7" rx="2.2" ry="2.1" transform="rotate(148 114.4 113.7)"/><ellipse cx="105.9" cy="103.3" rx="2.5" ry="1.5" transform="rotate(166 105.9 103.3)"/><ellipse cx="102.1" cy="124.0" rx="3.2" ry="1.0" transform="rotate(74 102.1 124.0)"/><ellipse cx="112.0" cy="150.6" rx="1.7" ry="1.0" transform="rotate(11 112.0 150.6)"/><ellipse cx="113.7" cy="117.0" rx="2.9" ry="2.2" transform="rotate(61 113.7 117.0)"/><ellipse cx="103.4" cy="163.2" rx="2.7" ry="1.3" transform="rotate(129 103.4 163.2)"/><ellipse cx="104.1" cy="118.2" rx="1.6" ry="2.0" transform="rotate(165 104.1 118.2)"/><ellipse cx="109.1" cy="162.3" rx="1.6" ry="1.3" transform="rotate(86 109.1 162.3)"/><ellipse cx="114.3" cy="163.0" rx="2.3" ry="1.3" transform="rotate(77 114.3 163.0)"/><ellipse cx="106.9" cy="161.3" rx="1.9" ry="2.1" transform="rotate(133 106.9 161.3)"/><ellipse cx="112.2" cy="151.0" rx="2.7" ry="1.4" transform="rotate(58 112.2 151.0)"/><ellipse cx="104.8" cy="151.6" rx="1.7" ry="1.2" transform="rotate(136 104.8 151.6)"/><ellipse cx="103.0" cy="104.3" rx="1.7" ry="1.7" transform="rotate(59 103.0 104.3)"/><ellipse cx="114.7" cy="158.3" rx="3.4" ry="1.3" transform="rotate(15 114.7 158.3)"/><ellipse cx="100.5" cy="132.9" rx="2.9" ry="1.6" transform="rotate(42 100.5 132.9)"/><ellipse cx="105.7" cy="140.9" rx="2.8" ry="2.0" transform="rotate(152 105.7 140.9)"/><ellipse cx="109.6" cy="108.0" rx="3.1" ry="1.4" transform="rotate(102 109.6 108.0)"/><ellipse cx="105.0" cy="148.7" rx="2.0" ry="1.3" transform="rotate(44 105.0 148.7)"/><ellipse cx="101.5" cy="158.4" rx="2.6" ry="1.4" transform="rotate(71 101.5 158.4)"/><ellipse cx="114.9" cy="133.5" rx="2.0" ry="2.1" transform="rotate(118 114.9 133.5)"/><ellipse cx="114.9" cy="106.8" rx="2.5" ry="2.1" transform="rotate(151 114.9 106.8)"/><ellipse cx="113.6" cy="102.7" rx="2.1" ry="1.1" transform="rotate(34 113.6 102.7)"/><ellipse cx="114.6" cy="138.5" rx="3.3" ry="1.5" transform="rotate(156 114.6 138.5)"/><ellipse cx="106.2" cy="117.2" rx="3.0" ry="2.3" transform="rotate(19 106.2 117.2)"/><ellipse cx="108.5" cy="140.9" rx="2.0" ry="1.5" transform="rotate(25 108.5 140.9)"/><ellipse cx="102.3" cy="116.8" rx="2.7" ry="1.9" transform="rotate(37 102.3 116.8)"/><ellipse cx="99.2" cy="121.6" rx="2.8" ry="1.2" transform="rotate(56 99.2 121.6)"/><ellipse cx="102.3" cy="152.5" rx="2.6" ry="1.0" transform="rotate(18 102.3 152.5)"/><ellipse cx="105.3" cy="136.3" rx="2.8" ry="1.1" transform="rotate(29 105.3 136.3)"/><ellipse cx="110.1" cy="127.0" rx="2.1" ry="1.4" transform="rotate(172 110.1 127.0)"/><ellipse cx="104.0" cy="137.4" rx="2.2" ry="1.6" transform="rotate(156 104.0 137.4)"/><ellipse cx="114.9" cy="124.0" rx="2.0" ry="2.0" transform="rotate(37 114.9 124.0)"/><ellipse cx="99.1" cy="159.5" rx="2.4" ry="2.1" transform="rotate(73 99.1 159.5)"/><ellipse cx="113.1" cy="130.4" rx="1.9" ry="1.0" transform="rotate(99 113.1 130.4)"/><ellipse cx="109.3" cy="160.0" rx="1.8" ry="1.8" transform="rotate(67 109.3 160.0)"/><ellipse cx="107.1" cy="109.6" rx="2.1" ry="1.7" transform="rotate(167 107.1 109.6)"/><ellipse cx="100.7" cy="132.4" rx="3.0" ry="2.3" transform="rotate(36 100.7 132.4)"/><ellipse cx="101.0" cy="162.2" rx="3.4" ry="1.6" transform="rotate(10 101.0 162.2)"/><ellipse cx="113.8" cy="125.6" rx="3.2" ry="1.8" transform="rotate(148 113.8 125.6)"/><ellipse cx="101.6" cy="151.9" rx="2.0" ry="1.5" transform="rotate(152 101.6 151.9)"/></g>
<path d="M27.8 101.4 Q45 97 50 92.6 Q63 99 76 92.6 Q84 97 101.2 101.4 L96.4 140.8 L101.2 167 L23.8 167 L31.8 140.8Z" fill="url(#gD4)"/>
<path d="M39.6 71.6 Q63 76.4 82.4 71.6" stroke="#8ecbe4" stroke-width="1.6" fill="none"/>
<path d="M61.4 3 Q46 8 44.6 30 Q44 46 40 56 Q36 66 42 70 Q34 76 24 75.4 Q20 72 24 67 Q33.6 60 30.5 52 Q35 40 38 24 Q42 5 61.4 3Z" fill="url(#gH4)"/>
<path d="M64.6 3 Q80 8 80.6 30 Q81 46 79 56 Q78 66 84 72 Q92 80 104 88 Q110 83 108 77 Q98 66 96 60 Q91 46 89 30 Q86 5 64.6 3Z" fill="url(#gH4)"/>
<path d="M60 4 L63 20 L66 4Z" fill="#4a2c18"/>
<g stroke="#d1a066" stroke-width="1.5" fill="none" opacity="0.7" filter="url(#bl05)"><path d="M54 8 Q44 22 41 44 Q38 58 30 68"/><path d="M48 14 Q40 30 36 50"/><path d="M72 8 Q84 24 86 46 Q90 62 102 78"/><path d="M80 16 Q88 34 92 52"/></g>
<g stroke="#4a2e1a" stroke-width="1.4" fill="none" opacity="0.55" filter="url(#bl05)"><path d="M58 5 Q47 14 45 36 Q44 52 38 64"/><path d="M68 5 Q80 16 81 38 Q82 56 90 70"/></g>
</svg>
<div style="left:434px;top:639.5px;width:160.0px;height:21.5px;background:rgba(44,44,44,0.30);box-shadow:0 0 2.5px 1.5px rgba(44,44,44,0.30);"></div>
<span class="t" style="left:433.13px;top:642px;font-size:18.6px;line-height:18.6px;color:#fff;letter-spacing:0.496px;">Imyenda y'ubururu</span>
<span class="t" style="left:433.77px;top:769px;font-size:10.6px;line-height:10.6px;color:#fff;letter-spacing:0.097px;">20.00 USD</span>
<span class="t" style="left:433.50px;top:782px;font-size:10.6px;line-height:10.6px;color:#fff;letter-spacing:0.317px;">172.000 ibice</span>
<div style="left:817px;top:651px;width:9px;height:2px;background:#b4ffb4;"></div>
<div style="left:821px;top:647px;width:2px;height:10px;background:#b4ffb4;"></div>
<div style="left:11px;top:808px;width:408px;height:170px;background:linear-gradient(180deg,#3a3a3a,#6b6b6b);border:1px solid #8c8c8c;"></div>
<svg style="left:287px;top:809px" width="126" height="168" viewBox="0 0 126 168">
<path d="M56.8 1 Q42 2.4 37.4 14.3 Q34 26 33.4 34.6 L29.8 60 L29.3 76.4 L44 76.4 L70 72 L86.3 72.3 L83.3 56 L80.2 32.6 Q79 20 75.1 12.2 Q70 2 56.8 1Z" fill="url(#gH5)"/>
<path d="M46.6 54 L68 54 L68.4 70 L70 78 L38 78 L46 70Z" fill="#d38d63"/>
<path d="M38.5 75.2 L46 69 L66 69 L68.6 76.4 L51.2 95.4Z" fill="#db966a"/>
<path d="M40.4 36 Q40 18 56.4 17.2 Q72.8 18 72.6 36 Q72.4 46 67 54 Q61 60.6 56.4 60.6 Q52 60.6 46 54 Q40.6 46 40.4 36Z" fill="url(#skB)"/>
<g filter="url(#bl05)"><ellipse cx="48.6" cy="34" rx="3.1" ry="1.6" fill="#33241e"/><ellipse cx="63.6" cy="34" rx="3.1" ry="1.6" fill="#33241e"/>
<path d="M43.8 30.4 Q48.6 27.8 53.4 30.2 M59 30.2 Q64 27.8 69 30.4" stroke="#3c2416" stroke-width="1.3" fill="none"/>
<path d="M55 35 Q53.4 43.6 56.4 45 Q59.4 43.6 57.8 35" fill="#c58458" opacity="0.7"/>
<path d="M50 49.4 Q56.4 47 62.6 49.4 Q56.4 54.6 50 49.4Z" fill="#dd7684"/></g>
<path d="M56.8 1 Q42 2.4 37.4 14.3 Q34 26 33.4 34.6 L29.8 60 L29.3 76.4 L43.6 76.4 L44.4 66 L43.4 52 Q40.8 44 41 34 Q42 21 52 17.6 L56.6 14 L61 17.6 Q71 21 72.2 34 Q72 44 70 52 L70 56 L83.3 56 L80.2 32.6 Q79 20 75.1 12.2 Q70 2 56.8 1Z" fill="url(#gH5)"/>
<path d="M39.7 74.6 L17.6 84 L5 114 L23.1 125 L25.6 134.4 L22 150 L19.2 167 L94.8 167 L88 150 L86.9 136 L89 118 L102.7 118.7 L120.4 99.6 L101 76.4 L90 71.4 L68.4 76.4 L51.2 95.4Z" fill="url(#gD5)"/>
<path d="M51.2 95.4 L68.4 76.4 L84 118 L78 136 L26 136 Q44 124 51.2 95.4Z" fill="#f1d936" opacity="0.8"/>
<path d="M25.6 136 H87 L88 150 H22Z" fill="#efd431"/>
<path d="M25 142.6 H87.4 M40 150 L34 167 M30 150 Q50 146 60 150" stroke="#d9bd24" stroke-width="1" fill="none"/>
<path d="M14.5 121.6 L23.1 125.2 L26 140 L27 167 L17 167 L15 140Z" fill="#db9468"/>
<path d="M89 118.4 L102.7 119 L110 140 L116.8 167 L100 167 L92 140Z" fill="#db9468"/>
<path d="M70 52 L83.3 56 L86.3 72.3 L91.4 90.6 L92.6 112 Q90 134 82.2 151 Q80.4 130 79.2 109 L76.1 90.6 L70 70.3Z" fill="url(#gH5)"/>
<path d="M80 60 Q88 84 89.6 108 Q88 130 83 146" stroke="#9a6236" stroke-width="1.6" fill="none" opacity="0.7" filter="url(#bl05)"/>
<path d="M36 20 Q33.6 44 31.6 74 M72 10 Q78 30 80 54" stroke="#9a6236" stroke-width="1.4" fill="none" opacity="0.6" filter="url(#bl05)"/>
</svg>
<div style="left:18px;top:817.5px;width:184.0px;height:21.5px;background:rgba(44,44,44,0.30);box-shadow:0 0 2.5px 1.5px rgba(44,44,44,0.30);"></div>
<span class="t" style="left:17.13px;top:820px;font-size:18.6px;line-height:18.6px;color:#fff;letter-spacing:0.451px;">Imyenda y'umuhondo</span>
<span class="t" style="left:17.82px;top:947px;font-size:10.6px;line-height:10.6px;color:#fff;letter-spacing:0.058px;">9.50 USD</span>
<span class="t" style="left:17.88px;top:960px;font-size:10.6px;line-height:10.6px;color:#fff;letter-spacing:0.306px;">57.000 ibice</span>
<div style="left:427px;top:808px;width:408px;height:170px;background:linear-gradient(180deg,#3a3a3a,#6b6b6b);border:1px solid #8c8c8c;"></div>
<svg style="left:703px;top:809px" width="126" height="168" viewBox="0 0 126 168">
<path d="M68 1 Q52 2 46.6 14.3 Q40 28 39.5 40 L37.4 70 Q38 78 43.5 80.5 L53.7 86.6 L58 80 L78 80 L82.2 84 L90.4 80.5 Q97 74 97.5 65 L96.5 45 Q95 28 90.4 17.3 Q84 2 68 1Z" fill="#6e4432"/>
<path d="M57.6 66 Q57.6 80 50 85.4 Q30 85 23 83.6 Q8 86 3.8 102 L69.6 111.4 L123 115.4 Q123.4 106 118 101 Q110 94 104.6 92.6 Q92 89 86 85.6 Q79 80 79 66Z" fill="url(#gSk6)"/>
<path d="M57.6 72 Q66 80 79 72 L79 80 Q68 86 57.6 80Z" fill="#b87a56" opacity="0.6" filter="url(#bl1)"/>
<path d="M63.9 16.3 Q55 22 53 30 Q50.4 38 50.7 45 Q50.6 56 51.7 64 Q53 70 56 73.4 Q62 76.4 68 76 Q73 76 76.4 74.4 Q82 70 83.4 65 Q85.6 58 85.3 52 Q85 44 83.3 37.7 Q80 29 76 24.5 Q70 19 63.9 16.3Z" fill="url(#skB)"/>
<g filter="url(#bl05)"><ellipse cx="58.8" cy="40" rx="3.4" ry="1.7" fill="#35221c"/><ellipse cx="77.6" cy="39.4" rx="3.4" ry="1.7" fill="#35221c"/>
<path d="M53.4 35.8 Q58.6 32.8 64 35.4 M72.4 35 Q77.6 32.4 83 35.2" stroke="#5a3828" stroke-width="1.3" fill="none"/>
<path d="M67 41 Q64.8 52 68.4 53.6 Q72 52 70 41" fill="#c4845e" opacity="0.7"/>
<path d="M61.4 60.4 Q68.4 58.6 75.6 60.2 Q68.4 65.4 61.4 60.4Z" fill="#cf7682"/></g>
<path d="M66 2 Q52 3 46.6 14.3 Q40 28 39.5 40 L37.4 70 Q38 78 43.5 80.5 L53.7 86.6 Q54 80 52.6 74 Q51 68 51.6 64 Q50.4 54 50.7 45 Q50.4 38 53 30 Q55 22 63.9 16.3Z" fill="url(#gH6)"/>
<path d="M66 2 Q84 2 90.4 17.3 Q95 28 96.5 45 L97.5 65 Q97 74 90.4 80.5 L82.2 84 Q80 80 81.6 74 Q83 70 83.4 65 Q85.6 58 85.3 52 Q85 44 83.3 37.7 Q80 29 76 24.5 Q70 19 63.9 16.3Z" fill="url(#gH6)"/>
<path d="M3.4 102 Q30 106.4 69.6 110.8 Q100 112.4 123.1 114.8 L124.2 167 L1.2 167Z" fill="url(#gD6)"/>
<path d="M3.4 102 Q30 106.4 69.6 110.8 Q100 112.4 123.1 114.8" stroke="#f7b6b4" stroke-width="1.4" fill="none"/>
<path d="M36 110 L33 167 M92 114 L95 167 M18 106 L20 140 M108 116 L106 150" stroke="#f7b9b8" stroke-width="0.9" opacity="0.8"/>
<path d="M19.6 138 L21.6 167 L18.8 167Z" fill="#666"/>
</svg>
<div style="left:434px;top:817.5px;width:137.0px;height:21.5px;background:rgba(44,44,44,0.30);box-shadow:0 0 2.5px 1.5px rgba(44,44,44,0.30);"></div>
<span class="t" style="left:433.13px;top:820px;font-size:18.6px;line-height:18.6px;color:#fff;letter-spacing:0.332px;">Imyenda yijimye</span>
<span class="t" style="left:433.82px;top:947px;font-size:10.6px;line-height:10.6px;color:#fff;letter-spacing:0.058px;">9.00 USD</span>
<span class="t" style="left:433.88px;top:960px;font-size:10.6px;line-height:10.6px;color:#fff;letter-spacing:0.325px;">5.000 ibice</span>
<div style="left:3px;top:1033px;width:49px;height:41px;background:linear-gradient(180deg,#f8f8f8,#e9e9e9);border:1px solid #cfcfcf;border-radius:3px;"></div>
<div style="left:54px;top:1033px;width:49px;height:41px;background:linear-gradient(180deg,#f8f8f8,#e9e9e9);border:1px solid #cfcfcf;border-radius:3px;"></div>
<svg style="left:12px;top:1038px" width="30" height="30" viewBox="0 0 30 30">
<rect x="1.5" y="1.5" width="27" height="26" rx="1.5" fill="#fff" stroke="#4f84c9"/>
<rect x="2" y="2" width="26" height="6" fill="#5b93d6"/>
<g stroke="#7aa7dd" stroke-width="1"><path d="M2 8.5h26M2 14.5h26M2 20.5h26M10.5 8v19M19.5 8v19"/></g>
<rect x="1.5" y="1.5" width="27" height="26" rx="1.5" fill="none" stroke="#4f84c9"/></svg>
<svg style="left:61px;top:1038px" width="30" height="30" viewBox="0 0 30 30"><rect x="1.5" y="2.5" width="13" height="7" rx="1" fill="#8fbde9" stroke="#4f84c9"/><rect x="16.5" y="2.5" width="13" height="7" rx="1" fill="#8fbde9" stroke="#4f84c9"/><rect x="1.5" y="11.5" width="13" height="7" rx="1" fill="#8fbde9" stroke="#4f84c9"/><rect x="16.5" y="11.5" width="13" height="7" rx="1" fill="#8fbde9" stroke="#4f84c9"/><rect x="1.5" y="20.5" width="13" height="7" rx="1" fill="#8fbde9" stroke="#4f84c9"/><rect x="16.5" y="20.5" width="13" height="7" rx="1" fill="#8fbde9" stroke="#4f84c9"/></svg>
<div style="left:894px;top:0px;width:1px;height:1080px;background:#b9b9b9;"></div>
<div style="left:895px;top:0px;width:1025px;height:1px;background:#c8bfae;"></div>
<div style="left:894px;top:1079px;width:1026px;height:1px;background:#c4c4c4;"></div>
<div style="left:895px;top:1px;width:1024px;height:42px;background:#00a8ff;"></div>
<div style="left:1919px;top:0px;width:1px;height:1080px;background:#e6ddd4;"></div>
<span class="t" style="left:1356.44px;top:9px;font-size:27.3px;line-height:27.3px;color:#fff;letter-spacing:0.058px;">Igurisha</span>
<svg style="left:1884px;top:8px" width="28" height="28" viewBox="0 0 28 28">
<path d="M6.2 6.2 L21.8 21.8 M21.8 6.2 L6.2 21.8" stroke="#fff" stroke-width="4.8" stroke-linecap="round" fill="none"/>
<path d="M6.2 6.2 L21.8 21.8 M21.8 6.2 L6.2 21.8" stroke="#000" stroke-width="3" stroke-linecap="round" fill="none"/></svg>
<span class="t" style="left:896.97px;top:56px;font-size:11px;line-height:11px;color:#222;letter-spacing:-0.341px;">Umugurisha</span>
<div style="left:988px;top:44px;width:35px;height:34px;background:linear-gradient(180deg,#f6f6f6,#e6e6e6);border:1px solid #d6d6d6;border-radius:3px;"></div>
<svg style="left:990px;top:45px" width="31" height="32" viewBox="0 0 31 32">
<defs><linearGradient id="lk" x1="0" y1="0" x2="0" y2="1"><stop offset="0" stop-color="#f7d774"/><stop offset="0.5" stop-color="#eab53c"/><stop offset="1" stop-color="#d8952a"/></linearGradient></defs>
<path d="M7.2 14 V9.6 a7.8 7.8 0 0 1 15.6 0 V14" fill="none" stroke="#596067" stroke-width="4.2"/>
<path d="M7.2 14 V9.6 a7.8 7.8 0 0 1 15.6 0 V14" fill="none" stroke="#aab1b8" stroke-width="1.5"/>
<rect x="3.5" y="12.7" width="23.2" height="16" rx="1.5" fill="url(#lk)" stroke="#b06f1e"/>
<path d="M15 16.6 a2.2 2.2 0 0 1 1.2 4 l0.9 4.4 h-4.2 l0.9 -4.4 a2.2 2.2 0 0 1 1.2 -4z" fill="#1c1c2a"/></svg>
<div style="left:1024px;top:46px;width:446px;height:29px;background:#f5f5f5;border:1px solid #c3c3c3;"></div>
<span class="t" style="left:1025.72px;top:53px;font-size:13px;line-height:13px;color:#b3b3b3;font-weight:bold;-webkit-text-stroke:0.3px #b3b3b3;letter-spacing:0.194px;">Umukozi # 2</span>
<svg style="left:1451px;top:57px" width="10" height="7" viewBox="0 0 10 7"><polygon points="1.5,1.5 8.5,1.5 5,5.5" fill="#b0b0b0"/></svg>
<div style="left:1472px;top:46px;width:446px;height:29px;background:#f5f5f5;border:1px solid #c3c3c3;"></div>
<span class="t" style="left:1473.56px;top:53px;font-size:13px;line-height:13px;color:#b3b3b3;font-weight:bold;-webkit-text-stroke:0.3px #b3b3b3;letter-spacing:0.549px;">Izina ryemewe n'amategeko</span>
<svg style="left:1900px;top:57px" width="10" height="7" viewBox="0 0 10 7"><polygon points="1.0,1.5 8.0,1.5 4.5,5.5" fill="#b0b0b0"/></svg>
<span class="t" style="left:896.97px;top:87px;font-size:11px;line-height:11px;color:#222;letter-spacing:-0.159px;">Umukiriya (F10)</span>
<div style="left:1024px;top:77px;width:446px;height:29px;background:#fff;border:1px solid #c3c3c3;"></div>
<div style="left:1472px;top:77px;width:446px;height:29px;background:#f5f5f5;border:1px solid #c3c3c3;"></div>
<span class="t" style="left:1473.88px;top:84px;font-size:13px;line-height:13px;color:#b3b3b3;font-weight:bold;-webkit-text-stroke:0.3px #b3b3b3;letter-spacing:0.831px;">09.12.2022</span>
<svg style="left:1900px;top:88px" width="10" height="7" viewBox="0 0 10 7"><polygon points="1.0,1.5 8.0,1.5 4.5,5.5" fill="#b0b0b0"/></svg>
<span class="t" style="left:897.72px;top:115px;font-size:13px;line-height:13px;color:#26262e;font-weight:bold;-webkit-text-stroke:0.3px #26262e;letter-spacing:0.243px;">Umukiriya usanzwe, Nta kugabanyirizwa</span>
<div style="left:895px;top:137px;width:1025px;height:26px;background:#00a8ff;"></div>
<span class="t" style="left:1328.57px;top:144px;font-size:13px;line-height:13px;color:#fff;font-weight:bold;-webkit-text-stroke:0.3px #fff;letter-spacing:0.273px;">Urutonde rwo kugurisha</span>
<span class="t" style="left:898.97px;top:169px;font-size:11px;line-height:11px;color:#222;letter-spacing:-0.155px;">Umubare (F7) na Barcode (F8)</span>
<span class="t" style="left:1472.01px;top:169px;font-size:11px;line-height:11px;color:#222;letter-spacing:-0.340px;">Izina RY'IGICURUZWA</span>
<div style="left:899px;top:182px;width:99px;height:29px;background:#fff;border:1px solid #c3c3c3;"></div>
<span class="t" style="left:901.10px;top:188px;font-size:18.3px;line-height:18.3px;color:#2b2b2b;font-weight:bold;-webkit-text-stroke:0.45px #2b2b2b;letter-spacing:2.045px;">1.000</span>
<svg style="left:980px;top:187px" width="10" height="7" viewBox="0 0 10 7"><polygon points="1.0,5.0 8.0,5.0 4.5,1.0" fill="#555"/></svg>
<svg style="left:980px;top:200px" width="10" height="7" viewBox="0 0 10 7"><polygon points="1.0,1.0 8.0,1.0 4.5,5.0" fill="#555"/></svg>
<span class="t" style="left:1005.44px;top:187px;font-size:16.5px;line-height:16.5px;color:#333;">x</span>
<div style="left:1024px;top:182px;width:446px;height:29px;background:#fff;border:1px solid #c3c3c3;"></div>
<span class="t" style="left:1026.27px;top:188px;font-size:18.3px;line-height:18.3px;color:#2b2b2b;font-weight:bold;-webkit-text-stroke:0.45px #2b2b2b;letter-spacing:2.038px;">0000000000000</span>
<div style="left:1472px;top:182px;width:446px;height:29px;background:#fff;border:1px solid #c3c3c3;"></div>
<div style="left:895px;top:213px;width:1024px;height:1px;background:#bdbdbd;"></div>
<div style="left:895px;top:213px;width:1px;height:680px;background:#bdbdbd;"></div>
<div style="left:1918px;top:213px;width:1px;height:680px;background:#bdbdbd;"></div>
<div style="left:896px;top:214px;width:1022px;height:46px;background:#f6f6f6;"></div>
<div style="left:896px;top:259px;width:1022px;height:1px;background:#bdbdbd;"></div>
<div style="left:906px;top:214px;width:1px;height:45px;background:#c6c6c6;"></div>
<div style="left:1367px;top:214px;width:1px;height:45px;background:#c6c6c6;"></div>
<div style="left:1507px;top:214px;width:1px;height:45px;background:#c6c6c6;"></div>
<div style="left:1644px;top:214px;width:1px;height:45px;background:#c6c6c6;"></div>
<div style="left:1743px;top:214px;width:1px;height:45px;background:#c6c6c6;"></div>
<span class="t" style="left:907.96px;top:230px;font-size:16px;line-height:16px;color:#333;letter-spacing:0.295px;">Izina</span>
<span class="t" style="left:1368.72px;top:230px;font-size:16px;line-height:16px;color:#333;letter-spacing:-0.340px;">Kugabanuka</span>
<span class="t" style="left:1508.56px;top:230px;font-size:16px;line-height:16px;color:#333;letter-spacing:0.740px;">Igiciro</span>
<span class="t" style="left:1645.80px;top:230px;font-size:16px;line-height:16px;color:#333;letter-spacing:0.193px;">Umubare</span>
<span class="t" style="left:1745.58px;top:230px;font-size:16px;line-height:16px;color:#333;letter-spacing:0.150px;">Sum</span>
<div style="left:896px;top:260px;width:10px;height:46px;background:#f6f6f6;"></div>
<div style="left:906px;top:260px;width:1px;height:46px;background:#c6c6c6;"></div>
<div style="left:907px;top:260px;width:1011px;height:46px;background:#d9f1ff;"></div>
<div style="left:896px;top:306px;width:1022px;height:1px;background:#bdbdbd;"></div>
<span class="t" style="left:908.10px;top:276px;font-size:16px;line-height:16px;color:#333;letter-spacing:0.213px;">1. Ikoti ry'abagabo b'ubururu, 10002, ibice</span>
<span class="t" style="left:1473.46px;top:276px;font-size:16px;line-height:16px;color:#333;letter-spacing:0.593px;">0.00</span>
<span class="t" style="left:1601.30px;top:276px;font-size:16px;line-height:16px;color:#333;letter-spacing:0.565px;">15.00</span>
<span class="t" style="left:1700.30px;top:276px;font-size:16px;line-height:16px;color:#333;letter-spacing:0.565px;">1.000</span>
<span class="t" style="left:1874.10px;top:276px;font-size:16px;line-height:16px;color:#333;letter-spacing:0.565px;">15.00</span>
<div style="left:896px;top:307px;width:10px;height:46px;background:#f6f6f6;"></div>
<div style="left:906px;top:307px;width:1px;height:46px;background:#c6c6c6;"></div>
<div style="left:907px;top:307px;width:1011px;height:46px;background:#dffbe4;"></div>
<div style="left:896px;top:353px;width:1022px;height:1px;background:#bdbdbd;"></div>
<span class="t" style="left:908.50px;top:323px;font-size:16px;line-height:16px;color:#333;letter-spacing:0.229px;">2. Imyenda y'ubururu, 10004, ibice</span>
<span class="t" style="left:1473.46px;top:323px;font-size:16px;line-height:16px;color:#333;letter-spacing:0.593px;">0.00</span>
<span class="t" style="left:1601.70px;top:323px;font-size:16px;line-height:16px;color:#333;letter-spacing:0.465px;">20.00</span>
<span class="t" style="left:1700.30px;top:323px;font-size:16px;line-height:16px;color:#333;letter-spacing:0.565px;">1.000</span>
<span class="t" style="left:1874.50px;top:323px;font-size:16px;line-height:16px;color:#333;letter-spacing:0.465px;">20.00</span>
<div style="left:896px;top:354px;width:10px;height:46px;background:#f6f6f6;"></div>
<div style="left:906px;top:354px;width:1px;height:46px;background:#c6c6c6;"></div>
<div style="left:907px;top:354px;width:1011px;height:46px;background:#d9f1ff;"></div>
<div style="left:896px;top:400px;width:1022px;height:1px;background:#bdbdbd;"></div>
<span class="t" style="left:908.66px;top:370px;font-size:16px;line-height:16px;color:#333;letter-spacing:0.122px;">3. Ikoti ry'abagabo b'icyatsi, 10003, ibice</span>
<span class="t" style="left:1473.46px;top:370px;font-size:16px;line-height:16px;color:#333;letter-spacing:0.593px;">0.00</span>
<span class="t" style="left:1601.30px;top:370px;font-size:16px;line-height:16px;color:#333;letter-spacing:0.565px;">15.00</span>
<span class="t" style="left:1700.30px;top:370px;font-size:16px;line-height:16px;color:#333;letter-spacing:0.565px;">1.000</span>
<span class="t" style="left:1874.10px;top:370px;font-size:16px;line-height:16px;color:#333;letter-spacing:0.565px;">15.00</span>
<div style="left:896px;top:401px;width:10px;height:46px;background:#f6f6f6;"></div>
<div style="left:906px;top:401px;width:1px;height:46px;background:#c6c6c6;"></div>
<div style="left:907px;top:401px;width:1011px;height:46px;background:#dffbe4;"></div>
<div style="left:896px;top:447px;width:1022px;height:1px;background:#bdbdbd;"></div>
<span class="t" style="left:908.98px;top:417px;font-size:16px;line-height:16px;color:#333;letter-spacing:0.182px;">4. Ikoti ryabagabo, 10001, ibice</span>
<span class="t" style="left:1473.46px;top:417px;font-size:16px;line-height:16px;color:#333;letter-spacing:0.593px;">0.00</span>
<span class="t" style="left:1601.30px;top:417px;font-size:16px;line-height:16px;color:#333;letter-spacing:0.565px;">15.00</span>
<span class="t" style="left:1700.30px;top:417px;font-size:16px;line-height:16px;color:#333;letter-spacing:0.565px;">1.000</span>
<span class="t" style="left:1874.10px;top:417px;font-size:16px;line-height:16px;color:#333;letter-spacing:0.565px;">15.00</span>
<svg style="left:898px;top:419px" width="6" height="10" viewBox="0 0 6 10"><polygon points="1,1 5,5 1,9" fill="#555"/></svg>
<div style="left:895px;top:892px;width:1024px;height:1px;background:#bdbdbd;"></div>
<div style="left:896px;top:893px;width:1023px;height:42px;background:#f4f4f4;"></div>
<div style="left:909px;top:895px;width:457px;height:37px;background:#fff;border:1px solid #cacaca;"></div>
<div style="left:1370px;top:895px;width:136px;height:37px;background:#fff;border:1px solid #cacaca;"></div>
<div style="left:1647px;top:895px;width:96px;height:37px;background:#fff;border:1px solid #cacaca;"></div>
<span class="t" style="left:914.84px;top:904px;font-size:21.6px;line-height:21.6px;color:#2b2b2b;font-weight:bold;-webkit-text-stroke:0.5px #2b2b2b;letter-spacing:1.530px;">65.00</span>
<span class="t" style="left:1488.88px;top:904px;font-size:21.6px;line-height:21.6px;color:#2b2b2b;font-weight:bold;-webkit-text-stroke:0.5px #2b2b2b;">0</span>
<span class="t" style="left:1724.42px;top:904px;font-size:21.6px;line-height:21.6px;color:#2b2b2b;font-weight:bold;-webkit-text-stroke:0.5px #2b2b2b;">4</span>
<div style="left:895px;top:935px;width:1025px;height:26px;background:#00a8ff;"></div>
<span class="t" style="left:1376.90px;top:942px;font-size:13px;line-height:13px;color:#fff;font-weight:bold;-webkit-text-stroke:0.3px #fff;letter-spacing:0.102px;">Kwishura</span>
<span class="t" style="left:895.62px;top:967px;font-size:11px;line-height:11px;color:#222;letter-spacing:-0.024px;">Kugenzura (F11)</span>
<span class="t" style="left:1151.58px;top:967px;font-size:11px;line-height:11px;color:#222;letter-spacing:-0.051px;">Ubwoko bwo kwishyura (F12)</span>
<span class="t" style="left:1408.70px;top:967px;font-size:11px;line-height:11px;color:#222;letter-spacing:-0.044px;">Amafaranga yatanzwe nabakiriya (F9)</span>
<span class="t" style="left:1665.00px;top:967px;font-size:11px;line-height:11px;color:#222;letter-spacing:-0.144px;">Amafaranga adasanzwe</span>
<div style="left:896px;top:980px;width:248px;height:29px;background:#fff;border:1px solid #c3c3c3;"></div>
<span class="t" style="left:897.95px;top:987px;font-size:13px;line-height:13px;color:#2b2b2b;font-weight:bold;-webkit-text-stroke:0.3px #2b2b2b;letter-spacing:0.562px;">Nta cheque (F11)</span>
<svg style="left:1125px;top:991px" width="10" height="7" viewBox="0 0 10 7"><polygon points="1.5,1.5 8.5,1.5 5,5.5" fill="#555"/></svg>
<div style="left:1152px;top:980px;width:248px;height:29px;background:#fff;border:1px solid #c3c3c3;"></div>
<span class="t" style="left:1155.27px;top:987px;font-size:13px;line-height:13px;color:#2b2b2b;font-weight:bold;-webkit-text-stroke:0.3px #2b2b2b;letter-spacing:0.439px;">Amafaranga</span>
<svg style="left:1381px;top:991px" width="10" height="7" viewBox="0 0 10 7"><polygon points="1.5,1.5 8.5,1.5 5,5.5" fill="#555"/></svg>
<div style="left:1408px;top:980px;width:248px;height:29px;background:#3fae3a;border:1px solid #2b3a2b;"></div>
<span class="t" style="left:1410.07px;top:985px;font-size:18.3px;line-height:18.3px;color:#3a3f3a;font-weight:bold;-webkit-text-stroke:0.45px #3a3f3a;letter-spacing:2.123px;">0.00</span>
<svg style="left:1638px;top:986px" width="9" height="6" viewBox="0 0 9 6"><polygon points="1.0,4.0 7.0,4.0 4,1.0" fill="#2f7d2c"/></svg>
<svg style="left:1638px;top:998px" width="9" height="6" viewBox="0 0 9 6"><polygon points="1.0,1.0 7.0,1.0 4,4.0" fill="#2f7d2c"/></svg>
<span class="t" style="left:1664.87px;top:985px;font-size:18.3px;line-height:18.3px;color:#2b2b2b;font-weight:bold;-webkit-text-stroke:0.45px #2b2b2b;letter-spacing:2.217px;">-65.00</span>
<div style="left:895px;top:1012px;width:250px;height:63px;background:#a3ec95;border:1px solid #000;"></div>
<span class="t" style="left:966.32px;top:1033px;font-size:21.3px;line-height:21.3px;color:#000;font-weight:bold;-webkit-text-stroke:0.55px #000;letter-spacing:0.055px;">Kugurisha</span>
<div style="left:1151px;top:1012px;width:250px;height:63px;background:#ffffa5;border:1px solid #000;"></div>
<span class="t" style="left:1226.65px;top:1033px;font-size:21.3px;line-height:21.3px;color:#000;font-weight:bold;-webkit-text-stroke:0.55px #000;letter-spacing:0.088px;">Gusubika</span>
<div style="left:1407px;top:1012px;width:250px;height:63px;background:#ffdda1;border:1px solid #000;"></div>
<span class="t" style="left:1460.97px;top:1033px;font-size:21.3px;line-height:21.3px;color:#000;font-weight:bold;-webkit-text-stroke:0.55px #000;letter-spacing:0.716px;">Nta kwishura</span>
<div style="left:1663px;top:1012px;width:250px;height:63px;background:#ff9e9e;border:1px solid #000;"></div>
<span class="t" style="left:1750.17px;top:1033px;font-size:21.3px;line-height:21.3px;color:#000;font-weight:bold;-webkit-text-stroke:0.55px #000;letter-spacing:0.373px;">Kureka</span>
<div style="left:887px;top:532px;width:1px;height:1px;background:#5a5a5a;"></div>
<div style="left:887px;top:534px;width:1px;height:1px;background:#5a5a5a;"></div>
<div style="left:887px;top:536px;width:1px;height:1px;background:#5a5a5a;"></div>
<div style="left:887px;top:538px;width:1px;height:1px;background:#5a5a5a;"></div>
<div style="left:887px;top:540px;width:1px;height:1px;background:#5a5a5a;"></div>
<div style="left:887px;top:542px;width:1px;height:1px;background:#5a5a5a;"></div>
<div style="left:887px;top:544px;width:1px;height:1px;background:#5a5a5a;"></div>
<div style="left:887px;top:546px;width:1px;height:1px;background:#5a5a5a;"></div>
</body></html>
